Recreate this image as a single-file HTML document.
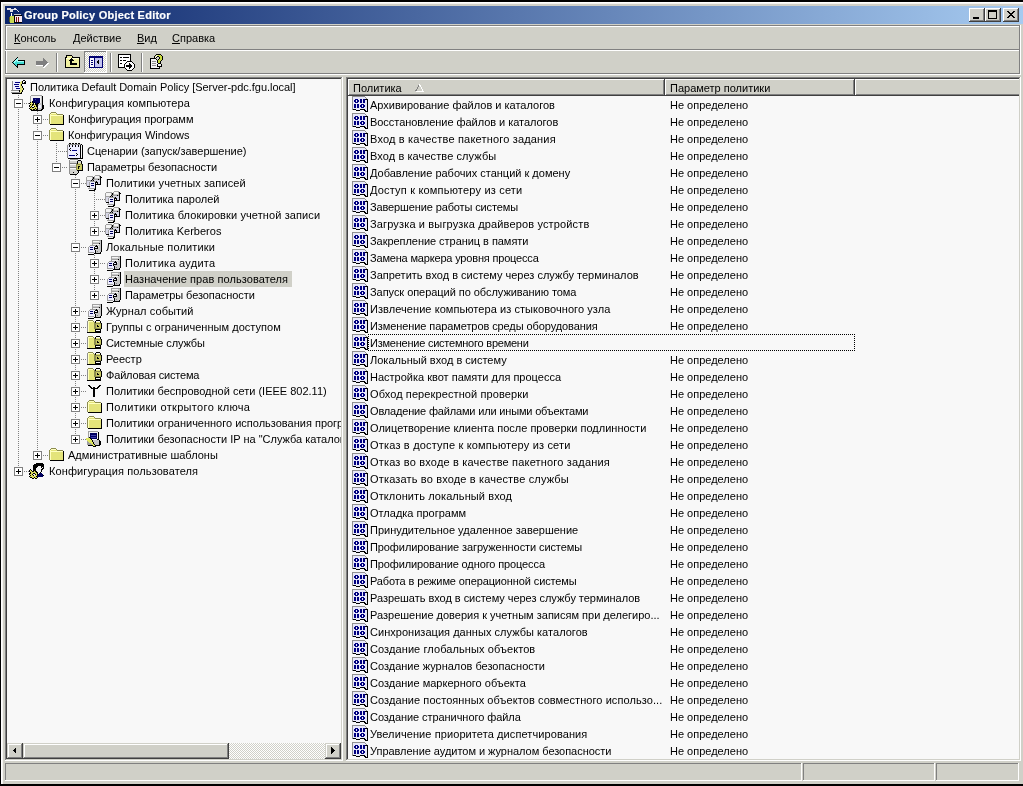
<!DOCTYPE html><html><head><meta charset="utf-8"><style>
html,body{margin:0;padding:0;}
body{width:1023px;height:786px;overflow:hidden;position:relative;background:#000;font-family:"Liberation Sans", sans-serif;font-size:11px;}
.t{position:absolute;white-space:nowrap;line-height:13px;color:#000;will-change:transform;}
svg{shape-rendering:crispEdges;}
</style></head><body>
<svg width="0" height="0" style="position:absolute"><defs>
<symbol id="ico-list" viewBox="0 0 16 16"><rect x="0" y="0" width="13" height="1" fill="#909090"/><rect x="0" y="1" width="1" height="1" fill="#909090"/><rect x="1" y="1" width="12" height="1" fill="#E8E8FA"/><rect x="13" y="1" width="1" height="1" fill="#909090"/><rect x="0" y="2" width="1" height="1" fill="#909090"/><rect x="1" y="2" width="13" height="1" fill="#E8E8FA"/><rect x="14" y="2" width="1" height="1" fill="#909090"/><rect x="0" y="3" width="1" height="1" fill="#909090"/><rect x="1" y="3" width="2" height="1" fill="#E8E8FA"/><rect x="3" y="3" width="3" height="1" fill="#000080"/><rect x="6" y="3" width="2" height="1" fill="#E8E8FA"/><rect x="8" y="3" width="2" height="1" fill="#000080"/><rect x="10" y="3" width="1" height="1" fill="#E8E8FA"/><rect x="11" y="3" width="2" height="1" fill="#000080"/><rect x="13" y="3" width="3" height="1" fill="#000000"/><rect x="0" y="4" width="1" height="1" fill="#909090"/><rect x="1" y="4" width="1" height="1" fill="#E8E8FA"/><rect x="2" y="4" width="2" height="1" fill="#000080"/><rect x="4" y="4" width="1" height="1" fill="#E8E8FA"/><rect x="5" y="4" width="2" height="1" fill="#000080"/><rect x="7" y="4" width="1" height="1" fill="#E8E8FA"/><rect x="8" y="4" width="2" height="1" fill="#000080"/><rect x="10" y="4" width="1" height="1" fill="#E8E8FA"/><rect x="11" y="4" width="2" height="1" fill="#000080"/><rect x="13" y="4" width="2" height="1" fill="#E8E8FA"/><rect x="15" y="4" width="1" height="1" fill="#000000"/><rect x="0" y="5" width="1" height="1" fill="#909090"/><rect x="1" y="5" width="1" height="1" fill="#E8E8FA"/><rect x="2" y="5" width="2" height="1" fill="#000080"/><rect x="4" y="5" width="1" height="1" fill="#E8E8FA"/><rect x="5" y="5" width="2" height="1" fill="#000080"/><rect x="7" y="5" width="1" height="1" fill="#E8E8FA"/><rect x="8" y="5" width="2" height="1" fill="#000080"/><rect x="10" y="5" width="1" height="1" fill="#E8E8FA"/><rect x="11" y="5" width="2" height="1" fill="#000080"/><rect x="13" y="5" width="2" height="1" fill="#E8E8FA"/><rect x="15" y="5" width="1" height="1" fill="#000000"/><rect x="0" y="6" width="1" height="1" fill="#909090"/><rect x="1" y="6" width="2" height="1" fill="#E8E8FA"/><rect x="3" y="6" width="3" height="1" fill="#000080"/><rect x="6" y="6" width="2" height="1" fill="#E8E8FA"/><rect x="8" y="6" width="2" height="1" fill="#000080"/><rect x="10" y="6" width="1" height="1" fill="#E8E8FA"/><rect x="11" y="6" width="2" height="1" fill="#000080"/><rect x="13" y="6" width="2" height="1" fill="#E8E8FA"/><rect x="15" y="6" width="1" height="1" fill="#000000"/><rect x="0" y="7" width="1" height="1" fill="#909090"/><rect x="1" y="7" width="14" height="1" fill="#E8E8FA"/><rect x="15" y="7" width="1" height="1" fill="#000000"/><rect x="0" y="8" width="1" height="1" fill="#909090"/><rect x="1" y="8" width="1" height="1" fill="#E8E8FA"/><rect x="2" y="8" width="2" height="1" fill="#000080"/><rect x="4" y="8" width="1" height="1" fill="#E8E8FA"/><rect x="5" y="8" width="2" height="1" fill="#000080"/><rect x="7" y="8" width="2" height="1" fill="#E8E8FA"/><rect x="9" y="8" width="3" height="1" fill="#000080"/><rect x="12" y="8" width="3" height="1" fill="#E8E8FA"/><rect x="15" y="8" width="1" height="1" fill="#000000"/><rect x="0" y="9" width="1" height="1" fill="#909090"/><rect x="1" y="9" width="1" height="1" fill="#E8E8FA"/><rect x="2" y="9" width="2" height="1" fill="#000080"/><rect x="4" y="9" width="1" height="1" fill="#E8E8FA"/><rect x="5" y="9" width="2" height="1" fill="#000080"/><rect x="7" y="9" width="1" height="1" fill="#E8E8FA"/><rect x="8" y="9" width="2" height="1" fill="#000080"/><rect x="10" y="9" width="1" height="1" fill="#E8E8FA"/><rect x="11" y="9" width="2" height="1" fill="#000080"/><rect x="13" y="9" width="2" height="1" fill="#E8E8FA"/><rect x="15" y="9" width="1" height="1" fill="#000000"/><rect x="0" y="10" width="1" height="1" fill="#909090"/><rect x="1" y="10" width="1" height="1" fill="#E8E8FA"/><rect x="2" y="10" width="2" height="1" fill="#000080"/><rect x="4" y="10" width="1" height="1" fill="#E8E8FA"/><rect x="5" y="10" width="2" height="1" fill="#000080"/><rect x="7" y="10" width="1" height="1" fill="#E8E8FA"/><rect x="8" y="10" width="2" height="1" fill="#000080"/><rect x="10" y="10" width="1" height="1" fill="#E8E8FA"/><rect x="11" y="10" width="2" height="1" fill="#000080"/><rect x="13" y="10" width="2" height="1" fill="#E8E8FA"/><rect x="15" y="10" width="1" height="1" fill="#000000"/><rect x="0" y="11" width="1" height="1" fill="#909090"/><rect x="1" y="11" width="1" height="1" fill="#E8E8FA"/><rect x="2" y="11" width="2" height="1" fill="#000080"/><rect x="4" y="11" width="1" height="1" fill="#E8E8FA"/><rect x="5" y="11" width="2" height="1" fill="#000080"/><rect x="7" y="11" width="2" height="1" fill="#E8E8FA"/><rect x="9" y="11" width="3" height="1" fill="#000080"/><rect x="12" y="11" width="3" height="1" fill="#E8E8FA"/><rect x="15" y="11" width="1" height="1" fill="#000000"/><rect x="0" y="12" width="1" height="1" fill="#909090"/><rect x="1" y="12" width="14" height="1" fill="#E8E8FA"/><rect x="15" y="12" width="1" height="1" fill="#000000"/><rect x="0" y="13" width="1" height="1" fill="#909090"/><rect x="1" y="13" width="3" height="1" fill="#000000"/><rect x="4" y="13" width="4" height="1" fill="#E8E8FA"/><rect x="8" y="13" width="5" height="1" fill="#000000"/><rect x="13" y="13" width="2" height="1" fill="#E8E8FA"/><rect x="15" y="13" width="1" height="1" fill="#000000"/><rect x="4" y="14" width="4" height="1" fill="#000000"/><rect x="12" y="14" width="2" height="1" fill="#000000"/><rect x="14" y="14" width="1" height="1" fill="#E8E8FA"/><rect x="15" y="14" width="1" height="1" fill="#000000"/><rect x="13" y="15" width="3" height="1" fill="#000000"/></symbol>
<symbol id="ico-folder" viewBox="0 0 16 16"><rect x="2" y="1" width="5" height="1" fill="#8C8C50"/><rect x="1" y="2" width="1" height="1" fill="#8C8C50"/><rect x="2" y="2" width="5" height="1" fill="#FFFFC0"/><rect x="7" y="2" width="1" height="1" fill="#8C8C50"/><rect x="0" y="3" width="1" height="1" fill="#8C8C50"/><rect x="1" y="3" width="1" height="1" fill="#FFFFC0"/><rect x="2" y="3" width="6" height="1" fill="#E4E47A"/><rect x="8" y="3" width="6" height="1" fill="#8C8C50"/><rect x="0" y="4" width="1" height="1" fill="#8C8C50"/><rect x="1" y="4" width="13" height="1" fill="#FFFFC0"/><rect x="14" y="4" width="1" height="1" fill="#000000"/><rect x="0" y="5" width="1" height="1" fill="#8C8C50"/><rect x="1" y="5" width="1" height="1" fill="#FFFFC0"/><rect x="2" y="5" width="12" height="1" fill="#E4E47A"/><rect x="14" y="5" width="1" height="1" fill="#000000"/><rect x="0" y="6" width="1" height="1" fill="#8C8C50"/><rect x="1" y="6" width="1" height="1" fill="#FFFFC0"/><rect x="2" y="6" width="12" height="1" fill="#E4E47A"/><rect x="14" y="6" width="1" height="1" fill="#000000"/><rect x="0" y="7" width="1" height="1" fill="#8C8C50"/><rect x="1" y="7" width="1" height="1" fill="#FFFFC0"/><rect x="2" y="7" width="12" height="1" fill="#E4E47A"/><rect x="14" y="7" width="1" height="1" fill="#000000"/><rect x="0" y="8" width="1" height="1" fill="#8C8C50"/><rect x="1" y="8" width="1" height="1" fill="#FFFFC0"/><rect x="2" y="8" width="12" height="1" fill="#E4E47A"/><rect x="14" y="8" width="1" height="1" fill="#000000"/><rect x="0" y="9" width="1" height="1" fill="#8C8C50"/><rect x="1" y="9" width="1" height="1" fill="#FFFFC0"/><rect x="2" y="9" width="12" height="1" fill="#E4E47A"/><rect x="14" y="9" width="1" height="1" fill="#000000"/><rect x="0" y="10" width="1" height="1" fill="#8C8C50"/><rect x="1" y="10" width="1" height="1" fill="#FFFFC0"/><rect x="2" y="10" width="12" height="1" fill="#E4E47A"/><rect x="14" y="10" width="1" height="1" fill="#000000"/><rect x="0" y="11" width="1" height="1" fill="#8C8C50"/><rect x="1" y="11" width="1" height="1" fill="#FFFFC0"/><rect x="2" y="11" width="12" height="1" fill="#E4E47A"/><rect x="14" y="11" width="1" height="1" fill="#000000"/><rect x="0" y="12" width="1" height="1" fill="#8C8C50"/><rect x="1" y="12" width="1" height="1" fill="#FFFFC0"/><rect x="2" y="12" width="12" height="1" fill="#E4E47A"/><rect x="14" y="12" width="1" height="1" fill="#000000"/><rect x="1" y="13" width="14" height="1" fill="#000000"/></symbol>
<symbol id="ico-box-plus" viewBox="0 0 9 9">
<rect x="0.5" y="0.5" width="8" height="8" fill="#fff" stroke="#808080"/>
<rect x="2" y="4" width="5" height="1" fill="#000"/><rect x="4" y="2" width="1" height="5" fill="#000"/>
</symbol>
<symbol id="ico-box-minus" viewBox="0 0 9 9">
<rect x="0.5" y="0.5" width="8" height="8" fill="#fff" stroke="#808080"/>
<rect x="2" y="4" width="5" height="1" fill="#000"/>
</symbol>
<symbol id="ico-policy" viewBox="0 0 16 16"><rect x="13" y="1" width="2" height="1" fill="#000000"/><rect x="2" y="2" width="1" height="1" fill="#909090"/><rect x="3" y="2" width="8" height="1" fill="#EEEEFF"/><rect x="11" y="2" width="1" height="1" fill="#E4E47A"/><rect x="12" y="2" width="1" height="1" fill="#000000"/><rect x="14" y="2" width="1" height="1" fill="#F8F8F8"/><rect x="15" y="2" width="1" height="1" fill="#000000"/><rect x="2" y="3" width="1" height="1" fill="#909090"/><rect x="3" y="3" width="2" height="1" fill="#EEEEFF"/><rect x="5" y="3" width="5" height="1" fill="#000080"/><rect x="10" y="3" width="2" height="1" fill="#E4E47A"/><rect x="12" y="3" width="1" height="1" fill="#000000"/><rect x="14" y="3" width="2" height="1" fill="#000000"/><rect x="2" y="4" width="1" height="1" fill="#909090"/><rect x="3" y="4" width="7" height="1" fill="#EEEEFF"/><rect x="10" y="4" width="2" height="1" fill="#E4E47A"/><rect x="12" y="4" width="4" height="1" fill="#000000"/><rect x="2" y="5" width="1" height="1" fill="#909090"/><rect x="3" y="5" width="1" height="1" fill="#EEEEFF"/><rect x="4" y="5" width="5" height="1" fill="#000080"/><rect x="9" y="5" width="1" height="1" fill="#EEEEFF"/><rect x="10" y="5" width="1" height="1" fill="#E4E47A"/><rect x="11" y="5" width="1" height="1" fill="#000000"/><rect x="2" y="6" width="1" height="1" fill="#909090"/><rect x="3" y="6" width="7" height="1" fill="#EEEEFF"/><rect x="10" y="6" width="1" height="1" fill="#E4E47A"/><rect x="11" y="6" width="1" height="1" fill="#000000"/><rect x="2" y="7" width="1" height="1" fill="#909090"/><rect x="3" y="7" width="2" height="1" fill="#EEEEFF"/><rect x="5" y="7" width="4" height="1" fill="#000080"/><rect x="9" y="7" width="1" height="1" fill="#EEEEFF"/><rect x="10" y="7" width="2" height="1" fill="#E4E47A"/><rect x="12" y="7" width="1" height="1" fill="#000000"/><rect x="2" y="8" width="1" height="1" fill="#909090"/><rect x="3" y="8" width="7" height="1" fill="#EEEEFF"/><rect x="10" y="8" width="2" height="1" fill="#E4E47A"/><rect x="12" y="8" width="1" height="1" fill="#000000"/><rect x="2" y="9" width="1" height="1" fill="#909090"/><rect x="3" y="9" width="3" height="1" fill="#EEEEFF"/><rect x="6" y="9" width="4" height="1" fill="#000080"/><rect x="10" y="9" width="3" height="1" fill="#E4E47A"/><rect x="13" y="9" width="1" height="1" fill="#000000"/><rect x="2" y="10" width="1" height="1" fill="#909090"/><rect x="3" y="10" width="7" height="1" fill="#EEEEFF"/><rect x="10" y="10" width="3" height="1" fill="#E4E47A"/><rect x="13" y="10" width="1" height="1" fill="#000000"/><rect x="1" y="11" width="8" height="1" fill="#909090"/><rect x="9" y="11" width="1" height="1" fill="#000000"/><rect x="10" y="11" width="2" height="1" fill="#E4E47A"/><rect x="12" y="11" width="1" height="1" fill="#000000"/><rect x="1" y="12" width="8" height="1" fill="#F8F8F8"/><rect x="9" y="12" width="1" height="1" fill="#000000"/><rect x="10" y="12" width="2" height="1" fill="#E4E47A"/><rect x="12" y="12" width="1" height="1" fill="#000000"/><rect x="1" y="13" width="9" height="1" fill="#909090"/><rect x="10" y="13" width="1" height="1" fill="#E4E47A"/><rect x="11" y="13" width="1" height="1" fill="#000000"/><rect x="2" y="14" width="10" height="1" fill="#000000"/></symbol>
<symbol id="ico-computer" viewBox="0 0 16 16"><rect x="2" y="0" width="11" height="1" fill="#A0A0A0"/><rect x="1" y="1" width="1" height="1" fill="#A0A0A0"/><rect x="2" y="1" width="10" height="1" fill="#F4F4F4"/><rect x="12" y="1" width="1" height="1" fill="#C8C8C8"/><rect x="13" y="1" width="1" height="1" fill="#000000"/><rect x="1" y="2" width="1" height="1" fill="#A0A0A0"/><rect x="2" y="2" width="10" height="1" fill="#F4F4F4"/><rect x="12" y="2" width="1" height="1" fill="#C8C8C8"/><rect x="13" y="2" width="1" height="1" fill="#000000"/><rect x="1" y="3" width="1" height="1" fill="#A0A0A0"/><rect x="2" y="3" width="2" height="1" fill="#F4F4F4"/><rect x="4" y="3" width="7" height="1" fill="#000060"/><rect x="11" y="3" width="1" height="1" fill="#F4F4F4"/><rect x="12" y="3" width="1" height="1" fill="#C8C8C8"/><rect x="13" y="3" width="1" height="1" fill="#000000"/><rect x="1" y="4" width="1" height="1" fill="#A0A0A0"/><rect x="2" y="4" width="2" height="1" fill="#F4F4F4"/><rect x="4" y="4" width="2" height="1" fill="#000060"/><rect x="6" y="4" width="1" height="1" fill="#4040B0"/><rect x="7" y="4" width="4" height="1" fill="#000060"/><rect x="11" y="4" width="1" height="1" fill="#F4F4F4"/><rect x="12" y="4" width="1" height="1" fill="#C8C8C8"/><rect x="13" y="4" width="1" height="1" fill="#000000"/><rect x="1" y="5" width="1" height="1" fill="#A0A0A0"/><rect x="2" y="5" width="2" height="1" fill="#F4F4F4"/><rect x="4" y="5" width="7" height="1" fill="#000060"/><rect x="11" y="5" width="1" height="1" fill="#F4F4F4"/><rect x="12" y="5" width="1" height="1" fill="#C8C8C8"/><rect x="13" y="5" width="1" height="1" fill="#000000"/><rect x="1" y="6" width="1" height="1" fill="#A0A0A0"/><rect x="2" y="6" width="1" height="1" fill="#F4F4F4"/><rect x="3" y="6" width="1" height="1" fill="#000000"/><rect x="4" y="6" width="7" height="1" fill="#000060"/><rect x="11" y="6" width="1" height="1" fill="#F4F4F4"/><rect x="12" y="6" width="1" height="1" fill="#C8C8C8"/><rect x="13" y="6" width="1" height="1" fill="#000000"/><rect x="1" y="7" width="1" height="1" fill="#000000"/><rect x="2" y="7" width="1" height="1" fill="#DCDC60"/><rect x="3" y="7" width="1" height="1" fill="#000000"/><rect x="4" y="7" width="1" height="1" fill="#000060"/><rect x="5" y="7" width="1" height="1" fill="#000000"/><rect x="6" y="7" width="5" height="1" fill="#000060"/><rect x="11" y="7" width="1" height="1" fill="#F4F4F4"/><rect x="12" y="7" width="1" height="1" fill="#C8C8C8"/><rect x="13" y="7" width="1" height="1" fill="#000000"/><rect x="0" y="8" width="1" height="1" fill="#000000"/><rect x="1" y="8" width="3" height="1" fill="#DCDC60"/><rect x="4" y="8" width="1" height="1" fill="#000000"/><rect x="5" y="8" width="1" height="1" fill="#F4F4F4"/><rect x="6" y="8" width="1" height="1" fill="#000000"/><rect x="7" y="8" width="1" height="1" fill="#000060"/><rect x="8" y="8" width="2" height="1" fill="#000000"/><rect x="10" y="8" width="3" height="1" fill="#C8C8C8"/><rect x="13" y="8" width="1" height="1" fill="#000000"/><rect x="1" y="9" width="1" height="1" fill="#000000"/><rect x="2" y="9" width="1" height="1" fill="#DCDC60"/><rect x="3" y="9" width="2" height="1" fill="#000000"/><rect x="5" y="9" width="1" height="1" fill="#DCDC60"/><rect x="6" y="9" width="3" height="1" fill="#000000"/><rect x="9" y="9" width="4" height="1" fill="#C8C8C8"/><rect x="13" y="9" width="1" height="1" fill="#000000"/><rect x="0" y="10" width="1" height="1" fill="#000000"/><rect x="1" y="10" width="2" height="1" fill="#DCDC60"/><rect x="3" y="10" width="1" height="1" fill="#000000"/><rect x="4" y="10" width="3" height="1" fill="#DCDC60"/><rect x="7" y="10" width="2" height="1" fill="#000000"/><rect x="9" y="10" width="1" height="1" fill="#C8C8C8"/><rect x="10" y="10" width="2" height="1" fill="#EEEEFF"/><rect x="12" y="10" width="1" height="1" fill="#C8C8C8"/><rect x="13" y="10" width="2" height="1" fill="#000000"/><rect x="0" y="11" width="1" height="1" fill="#000000"/><rect x="1" y="11" width="1" height="1" fill="#DCDC60"/><rect x="2" y="11" width="1" height="1" fill="#000000"/><rect x="3" y="11" width="2" height="1" fill="#F4F4F4"/><rect x="5" y="11" width="1" height="1" fill="#000000"/><rect x="6" y="11" width="1" height="1" fill="#DCDC60"/><rect x="7" y="11" width="2" height="1" fill="#000000"/><rect x="9" y="11" width="3" height="1" fill="#EEEEFF"/><rect x="12" y="11" width="1" height="1" fill="#C8C8C8"/><rect x="13" y="11" width="2" height="1" fill="#000000"/><rect x="1" y="12" width="1" height="1" fill="#000000"/><rect x="2" y="12" width="1" height="1" fill="#DCDC60"/><rect x="3" y="12" width="2" height="1" fill="#000000"/><rect x="5" y="12" width="3" height="1" fill="#DCDC60"/><rect x="8" y="12" width="1" height="1" fill="#000000"/><rect x="9" y="12" width="3" height="1" fill="#EEEEFF"/><rect x="12" y="12" width="1" height="1" fill="#C8C8C8"/><rect x="13" y="12" width="2" height="1" fill="#000000"/><rect x="0" y="13" width="1" height="1" fill="#000000"/><rect x="1" y="13" width="5" height="1" fill="#DCDC60"/><rect x="6" y="13" width="1" height="1" fill="#000000"/><rect x="7" y="13" width="1" height="1" fill="#DCDC60"/><rect x="8" y="13" width="1" height="1" fill="#000000"/><rect x="9" y="13" width="4" height="1" fill="#C8C8C8"/><rect x="13" y="13" width="2" height="1" fill="#000000"/><rect x="1" y="14" width="2" height="1" fill="#000000"/><rect x="3" y="14" width="1" height="1" fill="#DCDC60"/><rect x="4" y="14" width="2" height="1" fill="#000000"/><rect x="6" y="14" width="1" height="1" fill="#DCDC60"/><rect x="7" y="14" width="2" height="1" fill="#000000"/><rect x="9" y="14" width="3" height="1" fill="#C8C8C8"/><rect x="12" y="14" width="2" height="1" fill="#000000"/><rect x="2" y="15" width="11" height="1" fill="#000000"/></symbol>
<symbol id="ico-scripts" viewBox="0 0 16 16"><rect x="2" y="0" width="2" height="1" fill="#000000"/><rect x="5" y="0" width="2" height="1" fill="#000000"/><rect x="8" y="0" width="2" height="1" fill="#000000"/><rect x="11" y="0" width="2" height="1" fill="#000000"/><rect x="1" y="1" width="13" height="1" fill="#909090"/><rect x="14" y="1" width="1" height="1" fill="#000000"/><rect x="0" y="2" width="1" height="1" fill="#909090"/><rect x="1" y="2" width="1" height="1" fill="#EEEEFF"/><rect x="2" y="2" width="1" height="1" fill="#000000"/><rect x="3" y="2" width="2" height="1" fill="#EEEEFF"/><rect x="5" y="2" width="1" height="1" fill="#000000"/><rect x="6" y="2" width="2" height="1" fill="#EEEEFF"/><rect x="8" y="2" width="1" height="1" fill="#000000"/><rect x="9" y="2" width="2" height="1" fill="#EEEEFF"/><rect x="11" y="2" width="1" height="1" fill="#000000"/><rect x="12" y="2" width="1" height="1" fill="#EEEEFF"/><rect x="13" y="2" width="1" height="1" fill="#000000"/><rect x="14" y="2" width="1" height="1" fill="#F8F8F8"/><rect x="15" y="2" width="1" height="1" fill="#000000"/><rect x="0" y="3" width="1" height="1" fill="#909090"/><rect x="1" y="3" width="1" height="1" fill="#EEEEFF"/><rect x="2" y="3" width="1" height="1" fill="#000000"/><rect x="3" y="3" width="2" height="1" fill="#EEEEFF"/><rect x="5" y="3" width="1" height="1" fill="#000000"/><rect x="6" y="3" width="2" height="1" fill="#EEEEFF"/><rect x="8" y="3" width="1" height="1" fill="#000000"/><rect x="9" y="3" width="2" height="1" fill="#EEEEFF"/><rect x="11" y="3" width="1" height="1" fill="#000000"/><rect x="12" y="3" width="1" height="1" fill="#EEEEFF"/><rect x="13" y="3" width="1" height="1" fill="#000000"/><rect x="14" y="3" width="1" height="1" fill="#F8F8F8"/><rect x="15" y="3" width="1" height="1" fill="#000000"/><rect x="0" y="4" width="1" height="1" fill="#909090"/><rect x="1" y="4" width="12" height="1" fill="#EEEEFF"/><rect x="13" y="4" width="1" height="1" fill="#000000"/><rect x="14" y="4" width="1" height="1" fill="#F8F8F8"/><rect x="15" y="4" width="1" height="1" fill="#000000"/><rect x="0" y="5" width="1" height="1" fill="#909090"/><rect x="1" y="5" width="2" height="1" fill="#EEEEFF"/><rect x="3" y="5" width="1" height="1" fill="#000000"/><rect x="4" y="5" width="9" height="1" fill="#EEEEFF"/><rect x="13" y="5" width="1" height="1" fill="#000000"/><rect x="14" y="5" width="1" height="1" fill="#F8F8F8"/><rect x="15" y="5" width="1" height="1" fill="#000000"/><rect x="0" y="6" width="1" height="1" fill="#909090"/><rect x="1" y="6" width="1" height="1" fill="#EEEEFF"/><rect x="2" y="6" width="1" height="1" fill="#000000"/><rect x="3" y="6" width="10" height="1" fill="#EEEEFF"/><rect x="13" y="6" width="1" height="1" fill="#000000"/><rect x="14" y="6" width="1" height="1" fill="#F8F8F8"/><rect x="15" y="6" width="1" height="1" fill="#000000"/><rect x="0" y="7" width="1" height="1" fill="#909090"/><rect x="1" y="7" width="2" height="1" fill="#EEEEFF"/><rect x="3" y="7" width="1" height="1" fill="#000000"/><rect x="4" y="7" width="1" height="1" fill="#EEEEFF"/><rect x="5" y="7" width="5" height="1" fill="#000080"/><rect x="10" y="7" width="3" height="1" fill="#EEEEFF"/><rect x="13" y="7" width="1" height="1" fill="#000000"/><rect x="14" y="7" width="1" height="1" fill="#F8F8F8"/><rect x="15" y="7" width="1" height="1" fill="#000000"/><rect x="0" y="8" width="1" height="1" fill="#909090"/><rect x="1" y="8" width="12" height="1" fill="#EEEEFF"/><rect x="13" y="8" width="1" height="1" fill="#000000"/><rect x="14" y="8" width="1" height="1" fill="#F8F8F8"/><rect x="15" y="8" width="1" height="1" fill="#000000"/><rect x="0" y="9" width="1" height="1" fill="#909090"/><rect x="1" y="9" width="12" height="1" fill="#EEEEFF"/><rect x="13" y="9" width="1" height="1" fill="#000000"/><rect x="14" y="9" width="1" height="1" fill="#F8F8F8"/><rect x="15" y="9" width="1" height="1" fill="#000000"/><rect x="0" y="10" width="1" height="1" fill="#909090"/><rect x="1" y="10" width="8" height="1" fill="#EEEEFF"/><rect x="9" y="10" width="1" height="1" fill="#000000"/><rect x="10" y="10" width="3" height="1" fill="#EEEEFF"/><rect x="13" y="10" width="1" height="1" fill="#000000"/><rect x="14" y="10" width="1" height="1" fill="#F8F8F8"/><rect x="15" y="10" width="1" height="1" fill="#000000"/><rect x="0" y="11" width="1" height="1" fill="#909090"/><rect x="1" y="11" width="9" height="1" fill="#EEEEFF"/><rect x="10" y="11" width="1" height="1" fill="#000000"/><rect x="11" y="11" width="2" height="1" fill="#EEEEFF"/><rect x="13" y="11" width="1" height="1" fill="#000000"/><rect x="14" y="11" width="1" height="1" fill="#F8F8F8"/><rect x="15" y="11" width="1" height="1" fill="#000000"/><rect x="0" y="12" width="1" height="1" fill="#909090"/><rect x="1" y="12" width="1" height="1" fill="#EEEEFF"/><rect x="2" y="12" width="6" height="1" fill="#000080"/><rect x="8" y="12" width="1" height="1" fill="#EEEEFF"/><rect x="9" y="12" width="1" height="1" fill="#000000"/><rect x="10" y="12" width="3" height="1" fill="#EEEEFF"/><rect x="13" y="12" width="1" height="1" fill="#000000"/><rect x="14" y="12" width="1" height="1" fill="#F8F8F8"/><rect x="15" y="12" width="1" height="1" fill="#000000"/><rect x="0" y="13" width="1" height="1" fill="#909090"/><rect x="1" y="13" width="12" height="1" fill="#EEEEFF"/><rect x="13" y="13" width="1" height="1" fill="#000000"/><rect x="14" y="13" width="1" height="1" fill="#F8F8F8"/><rect x="15" y="13" width="1" height="1" fill="#000000"/><rect x="0" y="14" width="1" height="1" fill="#909090"/><rect x="1" y="14" width="12" height="1" fill="#EEEEFF"/><rect x="13" y="14" width="1" height="1" fill="#000000"/><rect x="14" y="14" width="1" height="1" fill="#F8F8F8"/><rect x="15" y="14" width="1" height="1" fill="#000000"/><rect x="1" y="15" width="15" height="1" fill="#000000"/></symbol>
<symbol id="ico-secset" viewBox="0 0 16 16"><rect x="3" y="0" width="8" height="1" fill="#909090"/><rect x="2" y="1" width="1" height="1" fill="#909090"/><rect x="3" y="1" width="7" height="1" fill="#F8F8F8"/><rect x="10" y="1" width="1" height="1" fill="#D4D4D0"/><rect x="11" y="1" width="3" height="1" fill="#000000"/><rect x="2" y="2" width="1" height="1" fill="#909090"/><rect x="3" y="2" width="7" height="1" fill="#D4D4D0"/><rect x="10" y="2" width="1" height="1" fill="#000000"/><rect x="11" y="2" width="3" height="1" fill="#D4D4D0"/><rect x="14" y="2" width="1" height="1" fill="#000000"/><rect x="2" y="3" width="1" height="1" fill="#909090"/><rect x="3" y="3" width="7" height="1" fill="#D4D4D0"/><rect x="10" y="3" width="1" height="1" fill="#000000"/><rect x="11" y="3" width="3" height="1" fill="#D4D4D0"/><rect x="14" y="3" width="1" height="1" fill="#000000"/><rect x="2" y="4" width="1" height="1" fill="#909090"/><rect x="3" y="4" width="7" height="1" fill="#808080"/><rect x="10" y="4" width="1" height="1" fill="#000000"/><rect x="11" y="4" width="3" height="1" fill="#E4E47A"/><rect x="14" y="4" width="1" height="1" fill="#000000"/><rect x="2" y="5" width="1" height="1" fill="#909090"/><rect x="3" y="5" width="6" height="1" fill="#F8F8F8"/><rect x="9" y="5" width="6" height="1" fill="#8C8C50"/><rect x="15" y="5" width="1" height="1" fill="#000000"/><rect x="2" y="6" width="1" height="1" fill="#909090"/><rect x="3" y="6" width="6" height="1" fill="#D4D4D0"/><rect x="9" y="6" width="1" height="1" fill="#8C8C50"/><rect x="10" y="6" width="5" height="1" fill="#C8C860"/><rect x="15" y="6" width="1" height="1" fill="#000000"/><rect x="2" y="7" width="1" height="1" fill="#909090"/><rect x="3" y="7" width="6" height="1" fill="#D4D4D0"/><rect x="9" y="7" width="1" height="1" fill="#8C8C50"/><rect x="10" y="7" width="1" height="1" fill="#C8C860"/><rect x="11" y="7" width="2" height="1" fill="#000000"/><rect x="13" y="7" width="2" height="1" fill="#C8C860"/><rect x="15" y="7" width="1" height="1" fill="#000000"/><rect x="2" y="8" width="1" height="1" fill="#909090"/><rect x="3" y="8" width="6" height="1" fill="#808080"/><rect x="9" y="8" width="1" height="1" fill="#8C8C50"/><rect x="10" y="8" width="1" height="1" fill="#C8C860"/><rect x="11" y="8" width="1" height="1" fill="#000000"/><rect x="12" y="8" width="3" height="1" fill="#C8C860"/><rect x="15" y="8" width="1" height="1" fill="#000000"/><rect x="2" y="9" width="1" height="1" fill="#909090"/><rect x="3" y="9" width="6" height="1" fill="#F8F8F8"/><rect x="9" y="9" width="1" height="1" fill="#8C8C50"/><rect x="10" y="9" width="1" height="1" fill="#C8C860"/><rect x="11" y="9" width="1" height="1" fill="#000000"/><rect x="12" y="9" width="3" height="1" fill="#C8C860"/><rect x="15" y="9" width="1" height="1" fill="#000000"/><rect x="2" y="10" width="1" height="1" fill="#909090"/><rect x="3" y="10" width="6" height="1" fill="#D4D4D0"/><rect x="9" y="10" width="1" height="1" fill="#8C8C50"/><rect x="10" y="10" width="5" height="1" fill="#C8C860"/><rect x="15" y="10" width="1" height="1" fill="#000000"/><rect x="2" y="11" width="1" height="1" fill="#909090"/><rect x="3" y="11" width="7" height="1" fill="#D4D4D0"/><rect x="10" y="11" width="6" height="1" fill="#000000"/><rect x="2" y="12" width="1" height="1" fill="#909090"/><rect x="3" y="12" width="8" height="1" fill="#D4D4D0"/><rect x="11" y="12" width="1" height="1" fill="#000000"/><rect x="2" y="13" width="1" height="1" fill="#909090"/><rect x="3" y="13" width="3" height="1" fill="#D4D4D0"/><rect x="6" y="13" width="1" height="1" fill="#000000"/><rect x="7" y="13" width="4" height="1" fill="#D4D4D0"/><rect x="11" y="13" width="1" height="1" fill="#000000"/><rect x="2" y="14" width="1" height="1" fill="#909090"/><rect x="3" y="14" width="7" height="1" fill="#D4D4D0"/><rect x="10" y="14" width="1" height="1" fill="#000000"/><rect x="3" y="15" width="7" height="1" fill="#000000"/></symbol>
<symbol id="ico-secpol" viewBox="0 0 16 16"><rect x="5" y="1" width="9" height="1" fill="#A0A0A0"/><rect x="14" y="1" width="1" height="1" fill="#000000"/><rect x="5" y="2" width="1" height="1" fill="#A0A0A0"/><rect x="6" y="2" width="6" height="1" fill="#F4F4F4"/><rect x="12" y="2" width="2" height="1" fill="#C8C8C8"/><rect x="14" y="2" width="1" height="1" fill="#000000"/><rect x="5" y="3" width="1" height="1" fill="#A0A0A0"/><rect x="6" y="3" width="8" height="1" fill="#C8C8C8"/><rect x="14" y="3" width="1" height="1" fill="#000000"/><rect x="5" y="4" width="7" height="1" fill="#A0A0A0"/><rect x="12" y="4" width="1" height="1" fill="#000000"/><rect x="13" y="4" width="1" height="1" fill="#C8C8C8"/><rect x="14" y="4" width="1" height="1" fill="#000000"/><rect x="5" y="5" width="1" height="1" fill="#A0A0A0"/><rect x="6" y="5" width="6" height="1" fill="#F4F4F4"/><rect x="12" y="5" width="2" height="1" fill="#C8C8C8"/><rect x="14" y="5" width="1" height="1" fill="#000000"/><rect x="3" y="6" width="6" height="1" fill="#A0A0A0"/><rect x="9" y="6" width="1" height="1" fill="#000000"/><rect x="10" y="6" width="4" height="1" fill="#C8C8C8"/><rect x="14" y="6" width="1" height="1" fill="#000000"/><rect x="2" y="7" width="1" height="1" fill="#A0A0A0"/><rect x="3" y="7" width="5" height="1" fill="#EEEEFF"/><rect x="8" y="7" width="3" height="1" fill="#000000"/><rect x="11" y="7" width="1" height="1" fill="#F4F4F4"/><rect x="12" y="7" width="2" height="1" fill="#C8C8C8"/><rect x="14" y="7" width="1" height="1" fill="#000000"/><rect x="1" y="8" width="1" height="1" fill="#A0A0A0"/><rect x="2" y="8" width="1" height="1" fill="#EEEEFF"/><rect x="3" y="8" width="3" height="1" fill="#000060"/><rect x="6" y="8" width="1" height="1" fill="#EEEEFF"/><rect x="7" y="8" width="1" height="1" fill="#000000"/><rect x="8" y="8" width="2" height="1" fill="#EEEEFF"/><rect x="10" y="8" width="1" height="1" fill="#000000"/><rect x="11" y="8" width="3" height="1" fill="#C8C8C8"/><rect x="14" y="8" width="1" height="1" fill="#000000"/><rect x="1" y="9" width="1" height="1" fill="#A0A0A0"/><rect x="2" y="9" width="5" height="1" fill="#EEEEFF"/><rect x="7" y="9" width="4" height="1" fill="#000000"/><rect x="11" y="9" width="3" height="1" fill="#C8C8C8"/><rect x="14" y="9" width="1" height="1" fill="#000000"/><rect x="1" y="10" width="1" height="1" fill="#A0A0A0"/><rect x="2" y="10" width="1" height="1" fill="#EEEEFF"/><rect x="3" y="10" width="3" height="1" fill="#000060"/><rect x="6" y="10" width="1" height="1" fill="#EEEEFF"/><rect x="7" y="10" width="1" height="1" fill="#000000"/><rect x="8" y="10" width="6" height="1" fill="#C8C8C8"/><rect x="14" y="10" width="1" height="1" fill="#000000"/><rect x="1" y="11" width="1" height="1" fill="#A0A0A0"/><rect x="2" y="11" width="6" height="1" fill="#EEEEFF"/><rect x="8" y="11" width="1" height="1" fill="#000000"/><rect x="9" y="11" width="5" height="1" fill="#C8C8C8"/><rect x="14" y="11" width="1" height="1" fill="#000000"/><rect x="1" y="12" width="1" height="1" fill="#A0A0A0"/><rect x="2" y="12" width="6" height="1" fill="#EEEEFF"/><rect x="8" y="12" width="1" height="1" fill="#000000"/><rect x="9" y="12" width="1" height="1" fill="#C8C8C8"/><rect x="10" y="12" width="1" height="1" fill="#808080"/><rect x="11" y="12" width="3" height="1" fill="#C8C8C8"/><rect x="14" y="12" width="1" height="1" fill="#000000"/><rect x="1" y="13" width="6" height="1" fill="#A0A0A0"/><rect x="7" y="13" width="1" height="1" fill="#EEEEFF"/><rect x="8" y="13" width="1" height="1" fill="#000000"/><rect x="9" y="13" width="4" height="1" fill="#C8C8C8"/><rect x="13" y="13" width="1" height="1" fill="#000000"/><rect x="1" y="14" width="6" height="1" fill="#F4F4F4"/><rect x="7" y="14" width="7" height="1" fill="#000000"/><rect x="1" y="15" width="6" height="1" fill="#000000"/></symbol>
<symbol id="ico-secpol2" viewBox="0 0 16 16"><rect x="9" y="0" width="5" height="1" fill="#A0A0A0"/><rect x="1" y="1" width="6" height="1" fill="#A0A0A0"/><rect x="8" y="1" width="1" height="1" fill="#A0A0A0"/><rect x="9" y="1" width="4" height="1" fill="#F4F4F4"/><rect x="13" y="1" width="1" height="1" fill="#A0A0A0"/><rect x="14" y="1" width="1" height="1" fill="#000000"/><rect x="0" y="2" width="1" height="1" fill="#A0A0A0"/><rect x="1" y="2" width="5" height="1" fill="#F4F4F4"/><rect x="6" y="2" width="1" height="1" fill="#A0A0A0"/><rect x="7" y="2" width="1" height="1" fill="#000000"/><rect x="8" y="2" width="1" height="1" fill="#A0A0A0"/><rect x="9" y="2" width="4" height="1" fill="#F4F4F4"/><rect x="13" y="2" width="1" height="1" fill="#C8C8C8"/><rect x="14" y="2" width="2" height="1" fill="#000000"/><rect x="0" y="3" width="1" height="1" fill="#A0A0A0"/><rect x="1" y="3" width="5" height="1" fill="#F4F4F4"/><rect x="6" y="3" width="1" height="1" fill="#A0A0A0"/><rect x="7" y="3" width="1" height="1" fill="#000000"/><rect x="8" y="3" width="1" height="1" fill="#A0A0A0"/><rect x="9" y="3" width="5" height="1" fill="#C8C8C8"/><rect x="14" y="3" width="1" height="1" fill="#000000"/><rect x="0" y="4" width="1" height="1" fill="#A0A0A0"/><rect x="1" y="4" width="5" height="1" fill="#F4F4F4"/><rect x="6" y="4" width="1" height="1" fill="#000000"/><rect x="7" y="4" width="5" height="1" fill="#A0A0A0"/><rect x="12" y="4" width="1" height="1" fill="#000000"/><rect x="13" y="4" width="1" height="1" fill="#A0A0A0"/><rect x="14" y="4" width="1" height="1" fill="#000000"/><rect x="0" y="5" width="5" height="1" fill="#A0A0A0"/><rect x="5" y="5" width="1" height="1" fill="#000000"/><rect x="6" y="5" width="1" height="1" fill="#A0A0A0"/><rect x="7" y="5" width="1" height="1" fill="#000000"/><rect x="8" y="5" width="6" height="1" fill="#D8D8E8"/><rect x="14" y="5" width="1" height="1" fill="#000000"/><rect x="0" y="6" width="1" height="1" fill="#A0A0A0"/><rect x="1" y="6" width="3" height="1" fill="#D8D8E8"/><rect x="4" y="6" width="6" height="1" fill="#A0A0A0"/><rect x="10" y="6" width="1" height="1" fill="#000000"/><rect x="11" y="6" width="3" height="1" fill="#D8D8E8"/><rect x="14" y="6" width="1" height="1" fill="#000000"/><rect x="0" y="7" width="1" height="1" fill="#A0A0A0"/><rect x="1" y="7" width="2" height="1" fill="#D8D8E8"/><rect x="3" y="7" width="1" height="1" fill="#A0A0A0"/><rect x="4" y="7" width="5" height="1" fill="#EEEEFF"/><rect x="9" y="7" width="3" height="1" fill="#000000"/><rect x="12" y="7" width="2" height="1" fill="#D8D8E8"/><rect x="14" y="7" width="1" height="1" fill="#000000"/><rect x="0" y="8" width="1" height="1" fill="#A0A0A0"/><rect x="1" y="8" width="2" height="1" fill="#D8D8E8"/><rect x="3" y="8" width="1" height="1" fill="#A0A0A0"/><rect x="4" y="8" width="1" height="1" fill="#EEEEFF"/><rect x="5" y="8" width="3" height="1" fill="#000060"/><rect x="8" y="8" width="1" height="1" fill="#EEEEFF"/><rect x="9" y="8" width="1" height="1" fill="#000000"/><rect x="10" y="8" width="1" height="1" fill="#F4F4F4"/><rect x="11" y="8" width="1" height="1" fill="#000000"/><rect x="12" y="8" width="2" height="1" fill="#D8D8E8"/><rect x="14" y="8" width="1" height="1" fill="#000000"/><rect x="0" y="9" width="1" height="1" fill="#A0A0A0"/><rect x="1" y="9" width="2" height="1" fill="#D8D8E8"/><rect x="3" y="9" width="1" height="1" fill="#A0A0A0"/><rect x="4" y="9" width="5" height="1" fill="#EEEEFF"/><rect x="9" y="9" width="6" height="1" fill="#000000"/><rect x="0" y="10" width="1" height="1" fill="#A0A0A0"/><rect x="1" y="10" width="2" height="1" fill="#D8D8E8"/><rect x="3" y="10" width="1" height="1" fill="#A0A0A0"/><rect x="4" y="10" width="1" height="1" fill="#EEEEFF"/><rect x="5" y="10" width="3" height="1" fill="#000060"/><rect x="8" y="10" width="1" height="1" fill="#EEEEFF"/><rect x="9" y="10" width="1" height="1" fill="#000000"/><rect x="1" y="11" width="3" height="1" fill="#000000"/><rect x="4" y="11" width="5" height="1" fill="#EEEEFF"/><rect x="9" y="11" width="1" height="1" fill="#000000"/><rect x="3" y="12" width="1" height="1" fill="#A0A0A0"/><rect x="4" y="12" width="5" height="1" fill="#EEEEFF"/><rect x="9" y="12" width="1" height="1" fill="#000000"/><rect x="2" y="13" width="7" height="1" fill="#A0A0A0"/><rect x="9" y="13" width="1" height="1" fill="#000000"/><rect x="3" y="14" width="5" height="1" fill="#F4F4F4"/><rect x="8" y="14" width="2" height="1" fill="#000000"/><rect x="3" y="15" width="6" height="1" fill="#000000"/></symbol>
<symbol id="ico-lockfolder" viewBox="0 0 16 16"><rect x="1" y="1" width="5" height="1" fill="#8C8C50"/><rect x="9" y="1" width="4" height="1" fill="#000000"/><rect x="0" y="2" width="1" height="1" fill="#909090"/><rect x="1" y="2" width="5" height="1" fill="#FFFFC0"/><rect x="6" y="2" width="1" height="1" fill="#8C8C50"/><rect x="8" y="2" width="1" height="1" fill="#000000"/><rect x="9" y="2" width="4" height="1" fill="#F8F8F8"/><rect x="13" y="2" width="1" height="1" fill="#000000"/><rect x="0" y="3" width="1" height="1" fill="#909090"/><rect x="1" y="3" width="1" height="1" fill="#FFFFC0"/><rect x="2" y="3" width="5" height="1" fill="#E4E47A"/><rect x="7" y="3" width="1" height="1" fill="#8C8C50"/><rect x="8" y="3" width="1" height="1" fill="#000000"/><rect x="9" y="3" width="4" height="1" fill="#E4E47A"/><rect x="13" y="3" width="1" height="1" fill="#000000"/><rect x="0" y="4" width="1" height="1" fill="#909090"/><rect x="1" y="4" width="1" height="1" fill="#FFFFC0"/><rect x="2" y="4" width="5" height="1" fill="#E4E47A"/><rect x="7" y="4" width="7" height="1" fill="#8C8C50"/><rect x="14" y="4" width="1" height="1" fill="#000000"/><rect x="0" y="5" width="1" height="1" fill="#909090"/><rect x="1" y="5" width="1" height="1" fill="#FFFFC0"/><rect x="2" y="5" width="5" height="1" fill="#E4E47A"/><rect x="7" y="5" width="2" height="1" fill="#8C8C50"/><rect x="9" y="5" width="5" height="1" fill="#C8C860"/><rect x="14" y="5" width="1" height="1" fill="#000000"/><rect x="0" y="6" width="1" height="1" fill="#909090"/><rect x="1" y="6" width="1" height="1" fill="#FFFFC0"/><rect x="2" y="6" width="5" height="1" fill="#E4E47A"/><rect x="7" y="6" width="2" height="1" fill="#8C8C50"/><rect x="9" y="6" width="1" height="1" fill="#C8C860"/><rect x="10" y="6" width="1" height="1" fill="#000000"/><rect x="11" y="6" width="3" height="1" fill="#C8C860"/><rect x="14" y="6" width="1" height="1" fill="#000000"/><rect x="0" y="7" width="1" height="1" fill="#909090"/><rect x="1" y="7" width="1" height="1" fill="#FFFFC0"/><rect x="2" y="7" width="5" height="1" fill="#E4E47A"/><rect x="7" y="7" width="2" height="1" fill="#8C8C50"/><rect x="9" y="7" width="1" height="1" fill="#C8C860"/><rect x="10" y="7" width="2" height="1" fill="#000000"/><rect x="12" y="7" width="2" height="1" fill="#C8C860"/><rect x="14" y="7" width="1" height="1" fill="#000000"/><rect x="0" y="8" width="1" height="1" fill="#909090"/><rect x="1" y="8" width="1" height="1" fill="#FFFFC0"/><rect x="2" y="8" width="5" height="1" fill="#E4E47A"/><rect x="7" y="8" width="2" height="1" fill="#8C8C50"/><rect x="9" y="8" width="5" height="1" fill="#C8C860"/><rect x="14" y="8" width="1" height="1" fill="#000000"/><rect x="0" y="9" width="1" height="1" fill="#909090"/><rect x="1" y="9" width="1" height="1" fill="#FFFFC0"/><rect x="2" y="9" width="5" height="1" fill="#E4E47A"/><rect x="7" y="9" width="7" height="1" fill="#8C8C50"/><rect x="14" y="9" width="1" height="1" fill="#000000"/><rect x="0" y="10" width="1" height="1" fill="#909090"/><rect x="1" y="10" width="1" height="1" fill="#FFFFC0"/><rect x="2" y="10" width="6" height="1" fill="#E4E47A"/><rect x="8" y="10" width="6" height="1" fill="#000000"/><rect x="0" y="11" width="1" height="1" fill="#909090"/><rect x="1" y="11" width="1" height="1" fill="#FFFFC0"/><rect x="2" y="11" width="6" height="1" fill="#E4E47A"/><rect x="8" y="11" width="1" height="1" fill="#000000"/><rect x="9" y="11" width="4" height="1" fill="#F8F8F8"/><rect x="13" y="11" width="1" height="1" fill="#000000"/><rect x="0" y="12" width="1" height="1" fill="#909090"/><rect x="1" y="12" width="1" height="1" fill="#FFFFC0"/><rect x="2" y="12" width="6" height="1" fill="#E4E47A"/><rect x="8" y="12" width="6" height="1" fill="#000000"/><rect x="0" y="13" width="14" height="1" fill="#000000"/></symbol>
<symbol id="ico-antenna" viewBox="0 0 16 16"><rect x="1" y="2" width="2" height="1" fill="#000000"/><rect x="12" y="2" width="2" height="1" fill="#000000"/><rect x="2" y="3" width="2" height="1" fill="#000000"/><rect x="11" y="3" width="2" height="1" fill="#000000"/><rect x="3" y="4" width="2" height="1" fill="#000000"/><rect x="6" y="4" width="2" height="1" fill="#000000"/><rect x="10" y="4" width="2" height="1" fill="#000000"/><rect x="4" y="5" width="7" height="1" fill="#000000"/><rect x="6" y="6" width="2" height="1" fill="#000000"/><rect x="6" y="7" width="2" height="1" fill="#000000"/><rect x="6" y="8" width="2" height="1" fill="#000000"/><rect x="6" y="9" width="2" height="1" fill="#000000"/><rect x="6" y="10" width="2" height="1" fill="#000000"/><rect x="6" y="11" width="2" height="1" fill="#000000"/><rect x="6" y="12" width="2" height="1" fill="#000000"/><rect x="6" y="13" width="2" height="1" fill="#000000"/></symbol>
<symbol id="ico-ipsec" viewBox="0 0 16 16"><rect x="2" y="0" width="10" height="1" fill="#A0A0A0"/><rect x="2" y="1" width="1" height="1" fill="#A0A0A0"/><rect x="3" y="1" width="9" height="1" fill="#F4F4F4"/><rect x="12" y="1" width="1" height="1" fill="#000000"/><rect x="2" y="2" width="1" height="1" fill="#A0A0A0"/><rect x="3" y="2" width="1" height="1" fill="#F4F4F4"/><rect x="4" y="2" width="7" height="1" fill="#000060"/><rect x="11" y="2" width="1" height="1" fill="#F4F4F4"/><rect x="12" y="2" width="1" height="1" fill="#000000"/><rect x="2" y="3" width="1" height="1" fill="#A0A0A0"/><rect x="3" y="3" width="1" height="1" fill="#F4F4F4"/><rect x="4" y="3" width="7" height="1" fill="#000060"/><rect x="11" y="3" width="1" height="1" fill="#F4F4F4"/><rect x="12" y="3" width="1" height="1" fill="#000000"/><rect x="2" y="4" width="1" height="1" fill="#A0A0A0"/><rect x="3" y="4" width="1" height="1" fill="#F4F4F4"/><rect x="4" y="4" width="1" height="1" fill="#000060"/><rect x="5" y="4" width="5" height="1" fill="#4040B0"/><rect x="10" y="4" width="1" height="1" fill="#000060"/><rect x="11" y="4" width="1" height="1" fill="#F4F4F4"/><rect x="12" y="4" width="1" height="1" fill="#000000"/><rect x="2" y="5" width="1" height="1" fill="#A0A0A0"/><rect x="3" y="5" width="1" height="1" fill="#F4F4F4"/><rect x="4" y="5" width="7" height="1" fill="#000060"/><rect x="11" y="5" width="1" height="1" fill="#F4F4F4"/><rect x="12" y="5" width="1" height="1" fill="#000000"/><rect x="2" y="6" width="1" height="1" fill="#A0A0A0"/><rect x="3" y="6" width="1" height="1" fill="#000000"/><rect x="4" y="6" width="1" height="1" fill="#000060"/><rect x="5" y="6" width="5" height="1" fill="#4040B0"/><rect x="10" y="6" width="1" height="1" fill="#000060"/><rect x="11" y="6" width="1" height="1" fill="#F4F4F4"/><rect x="12" y="6" width="1" height="1" fill="#000000"/><rect x="0" y="7" width="4" height="1" fill="#E0E860"/><rect x="4" y="7" width="1" height="1" fill="#000000"/><rect x="5" y="7" width="6" height="1" fill="#000060"/><rect x="11" y="7" width="1" height="1" fill="#F4F4F4"/><rect x="12" y="7" width="1" height="1" fill="#000000"/><rect x="0" y="8" width="5" height="1" fill="#E0E860"/><rect x="5" y="8" width="1" height="1" fill="#000000"/><rect x="6" y="8" width="5" height="1" fill="#F4F4F4"/><rect x="11" y="8" width="2" height="1" fill="#000000"/><rect x="1" y="9" width="5" height="1" fill="#E0E860"/><rect x="6" y="9" width="1" height="1" fill="#000000"/><rect x="7" y="9" width="6" height="1" fill="#C8C8C8"/><rect x="13" y="9" width="1" height="1" fill="#000000"/><rect x="1" y="10" width="1" height="1" fill="#A0A0A0"/><rect x="2" y="10" width="4" height="1" fill="#E0E860"/><rect x="6" y="10" width="1" height="1" fill="#000000"/><rect x="7" y="10" width="6" height="1" fill="#C8C8C8"/><rect x="13" y="10" width="2" height="1" fill="#000000"/><rect x="1" y="11" width="2" height="1" fill="#A0A0A0"/><rect x="3" y="11" width="4" height="1" fill="#E0E860"/><rect x="7" y="11" width="1" height="1" fill="#000000"/><rect x="8" y="11" width="5" height="1" fill="#C8C8C8"/><rect x="13" y="11" width="2" height="1" fill="#000000"/><rect x="1" y="12" width="4" height="1" fill="#A0A0A0"/><rect x="5" y="12" width="2" height="1" fill="#E0E860"/><rect x="7" y="12" width="1" height="1" fill="#000000"/><rect x="8" y="12" width="5" height="1" fill="#C8C8C8"/><rect x="13" y="12" width="2" height="1" fill="#000000"/><rect x="1" y="13" width="5" height="1" fill="#A0A0A0"/><rect x="6" y="13" width="2" height="1" fill="#E0E860"/><rect x="8" y="13" width="1" height="1" fill="#000000"/><rect x="9" y="13" width="4" height="1" fill="#C8C8C8"/><rect x="13" y="13" width="2" height="1" fill="#000000"/><rect x="2" y="14" width="5" height="1" fill="#000000"/><rect x="7" y="14" width="2" height="1" fill="#E0E860"/><rect x="9" y="14" width="5" height="1" fill="#000000"/><rect x="7" y="15" width="3" height="1" fill="#000000"/></symbol>
<symbol id="ico-user" viewBox="0 0 16 16"><rect x="7" y="0" width="7" height="1" fill="#000000"/><rect x="5" y="1" width="10" height="1" fill="#000000"/><rect x="4" y="2" width="11" height="1" fill="#000000"/><rect x="4" y="3" width="5" height="1" fill="#000000"/><rect x="9" y="3" width="3" height="1" fill="#F4F4F4"/><rect x="12" y="3" width="3" height="1" fill="#000000"/><rect x="4" y="4" width="4" height="1" fill="#000000"/><rect x="8" y="4" width="4" height="1" fill="#F4F4F4"/><rect x="12" y="4" width="1" height="1" fill="#000000"/><rect x="13" y="4" width="1" height="1" fill="#F4F4F4"/><rect x="14" y="4" width="1" height="1" fill="#000000"/><rect x="4" y="5" width="3" height="1" fill="#000000"/><rect x="7" y="5" width="6" height="1" fill="#F4F4F4"/><rect x="13" y="5" width="2" height="1" fill="#000000"/><rect x="1" y="6" width="1" height="1" fill="#000000"/><rect x="4" y="6" width="3" height="1" fill="#000000"/><rect x="7" y="6" width="5" height="1" fill="#F4F4F4"/><rect x="12" y="6" width="2" height="1" fill="#000000"/><rect x="0" y="7" width="1" height="1" fill="#000000"/><rect x="1" y="7" width="1" height="1" fill="#DCDC60"/><rect x="2" y="7" width="1" height="1" fill="#000000"/><rect x="4" y="7" width="3" height="1" fill="#000000"/><rect x="7" y="7" width="5" height="1" fill="#F4F4F4"/><rect x="12" y="7" width="1" height="1" fill="#000000"/><rect x="0" y="8" width="1" height="1" fill="#000000"/><rect x="1" y="8" width="2" height="1" fill="#DCDC60"/><rect x="3" y="8" width="2" height="1" fill="#000000"/><rect x="5" y="8" width="1" height="1" fill="#DCDC60"/><rect x="6" y="8" width="2" height="1" fill="#000000"/><rect x="8" y="8" width="4" height="1" fill="#F4F4F4"/><rect x="12" y="8" width="1" height="1" fill="#000000"/><rect x="1" y="9" width="1" height="1" fill="#000000"/><rect x="2" y="9" width="5" height="1" fill="#DCDC60"/><rect x="7" y="9" width="2" height="1" fill="#000000"/><rect x="9" y="9" width="2" height="1" fill="#F4F4F4"/><rect x="11" y="9" width="1" height="1" fill="#000000"/><rect x="0" y="10" width="2" height="1" fill="#000000"/><rect x="2" y="10" width="2" height="1" fill="#DCDC60"/><rect x="4" y="10" width="2" height="1" fill="#000000"/><rect x="6" y="10" width="2" height="1" fill="#DCDC60"/><rect x="8" y="10" width="1" height="1" fill="#000000"/><rect x="9" y="10" width="1" height="1" fill="#F4F4F4"/><rect x="10" y="10" width="3" height="1" fill="#000060"/><rect x="0" y="11" width="1" height="1" fill="#000000"/><rect x="1" y="11" width="2" height="1" fill="#DCDC60"/><rect x="3" y="11" width="1" height="1" fill="#000000"/><rect x="4" y="11" width="2" height="1" fill="#F4F4F4"/><rect x="6" y="11" width="1" height="1" fill="#000000"/><rect x="7" y="11" width="1" height="1" fill="#DCDC60"/><rect x="8" y="11" width="1" height="1" fill="#000000"/><rect x="9" y="11" width="5" height="1" fill="#000060"/><rect x="1" y="12" width="1" height="1" fill="#000000"/><rect x="2" y="12" width="2" height="1" fill="#DCDC60"/><rect x="4" y="12" width="1" height="1" fill="#000000"/><rect x="5" y="12" width="1" height="1" fill="#F4F4F4"/><rect x="6" y="12" width="2" height="1" fill="#DCDC60"/><rect x="8" y="12" width="1" height="1" fill="#000000"/><rect x="9" y="12" width="5" height="1" fill="#000060"/><rect x="14" y="12" width="1" height="1" fill="#000000"/><rect x="0" y="13" width="1" height="1" fill="#000000"/><rect x="1" y="13" width="6" height="1" fill="#DCDC60"/><rect x="7" y="13" width="1" height="1" fill="#000000"/><rect x="8" y="13" width="6" height="1" fill="#000060"/><rect x="1" y="14" width="2" height="1" fill="#000000"/><rect x="3" y="14" width="2" height="1" fill="#DCDC60"/><rect x="5" y="14" width="1" height="1" fill="#000000"/><rect x="6" y="14" width="2" height="1" fill="#DCDC60"/><rect x="8" y="14" width="1" height="1" fill="#000000"/><rect x="3" y="15" width="2" height="1" fill="#000000"/><rect x="6" y="15" width="2" height="1" fill="#000000"/></symbol>
<symbol id="tb-back" viewBox="0 0 16 16">
<path d="M1.5 5.5 L6.5 0.5 V3.5 H13.5 V7.5 H6.5 V10.5 Z" fill="#40D8D0" stroke="#000" stroke-width="1" stroke-linejoin="miter"/>
<path d="M3 5.5 L6 2.5 V4.5 H12.5" fill="none" stroke="#A0FFF8" stroke-width="1"/>
</symbol>
<symbol id="tb-fwd" viewBox="0 0 16 16">
<path d="M8.5 10.5 L13.5 5.5" stroke="#fff" stroke-width="1" fill="none" transform="translate(0.7,0.7)"/>
<path d="M1.5 8 H8.5" stroke="#fff" stroke-width="1" fill="none"/>
<path d="M13.5 5.5 L8.5 0.5 V3.5 H1.5 V7.5 H8.5 V10.5 Z" fill="#808080"/>
</symbol>
<symbol id="tb-up" viewBox="0 0 16 16">
<path d="M1.5 2.5 Q1.5 1.5 2.5 1.5 H6.5 L7.5 2.5 V3.5 H14.5 V13.5 H0.5 V3.5 H1.5 Z" fill="#F0F0A0" stroke="#000" stroke-width="1"/>
<rect x="1" y="4" width="13" height="1" fill="#FFFFD8"/>
<path d="M3 7 L6 4 L9 7 Z" fill="#000"/>
<rect x="5" y="6" width="2" height="5" fill="#000"/>
<rect x="5" y="9" width="7" height="2" fill="#000"/>
</symbol>
<symbol id="tb-tree" viewBox="0 0 14 12">
<rect x="0" y="0" width="14" height="12" fill="#000070"/>
<rect x="1" y="2" width="4" height="9" fill="#F8F8FF"/>
<rect x="6" y="2" width="7" height="9" fill="#C4C4F0"/>
<g fill="#000070"><rect x="2" y="4" width="2" height="1"/><rect x="2" y="6" width="2" height="1"/><rect x="2" y="8" width="2" height="1"/></g>
<path d="M10 3.5 V8.5 L7.5 6 Z" fill="#000"/>
</symbol>
<symbol id="tb-export" viewBox="0 0 17 17">
<rect x="0.5" y="0.5" width="12" height="13" fill="#fff" stroke="#000" stroke-width="1"/>
<g fill="#000"><rect x="2" y="2.5" width="1.5" height="1.5"/><rect x="2" y="5.5" width="1.5" height="1.5"/><rect x="2" y="8.5" width="1.5" height="1.5"/>
<rect x="5" y="3" width="6" height="1"/><rect x="5" y="6" width="3" height="1"/></g>
<path d="M9.5 7.5 H13.5 L16.5 10.5 V13.5 L13.5 16.5 H9.5 L6.5 13.5 V10.5 Z" fill="#fff" stroke="#000" stroke-width="1"/>
<path d="M8 11 H11 V9 L14 12 L11 15 V13 H8 Z" fill="#000"/>
</symbol>
<symbol id="tb-help" viewBox="0 0 16 16"><rect x="6" y="0" width="5" height="1" fill="#000000"/><rect x="5" y="1" width="1" height="1" fill="#000000"/><rect x="6" y="1" width="2" height="1" fill="#F0F8A0"/><rect x="8" y="1" width="3" height="1" fill="#C8DC40"/><rect x="11" y="1" width="1" height="1" fill="#000000"/><rect x="4" y="2" width="1" height="1" fill="#000000"/><rect x="5" y="2" width="1" height="1" fill="#F0F8A0"/><rect x="6" y="2" width="1" height="1" fill="#F4F4F4"/><rect x="7" y="2" width="2" height="1" fill="#000000"/><rect x="9" y="2" width="3" height="1" fill="#C8DC40"/><rect x="12" y="2" width="1" height="1" fill="#000000"/><rect x="4" y="3" width="1" height="1" fill="#000000"/><rect x="5" y="3" width="1" height="1" fill="#F4F4F4"/><rect x="6" y="3" width="1" height="1" fill="#000000"/><rect x="9" y="3" width="1" height="1" fill="#000000"/><rect x="10" y="3" width="2" height="1" fill="#C8DC40"/><rect x="12" y="3" width="1" height="1" fill="#000000"/><rect x="0" y="4" width="6" height="1" fill="#000000"/><rect x="9" y="4" width="1" height="1" fill="#000000"/><rect x="10" y="4" width="2" height="1" fill="#C8DC40"/><rect x="12" y="4" width="1" height="1" fill="#000000"/><rect x="0" y="5" width="1" height="1" fill="#000000"/><rect x="1" y="5" width="5" height="1" fill="#F4F4F4"/><rect x="6" y="5" width="1" height="1" fill="#000000"/><rect x="8" y="5" width="1" height="1" fill="#000000"/><rect x="9" y="5" width="3" height="1" fill="#C8DC40"/><rect x="12" y="5" width="1" height="1" fill="#000000"/><rect x="0" y="6" width="1" height="1" fill="#000000"/><rect x="1" y="6" width="6" height="1" fill="#F4F4F4"/><rect x="7" y="6" width="1" height="1" fill="#000000"/><rect x="8" y="6" width="3" height="1" fill="#C8DC40"/><rect x="11" y="6" width="1" height="1" fill="#000000"/><rect x="0" y="7" width="1" height="1" fill="#000000"/><rect x="1" y="7" width="1" height="1" fill="#F4F4F4"/><rect x="2" y="7" width="4" height="1" fill="#909090"/><rect x="6" y="7" width="1" height="1" fill="#F4F4F4"/><rect x="7" y="7" width="1" height="1" fill="#000000"/><rect x="8" y="7" width="2" height="1" fill="#C8DC40"/><rect x="10" y="7" width="1" height="1" fill="#000000"/><rect x="0" y="8" width="1" height="1" fill="#000000"/><rect x="1" y="8" width="6" height="1" fill="#F4F4F4"/><rect x="7" y="8" width="1" height="1" fill="#000000"/><rect x="8" y="8" width="2" height="1" fill="#C8DC40"/><rect x="10" y="8" width="1" height="1" fill="#000000"/><rect x="0" y="9" width="1" height="1" fill="#000000"/><rect x="1" y="9" width="1" height="1" fill="#F4F4F4"/><rect x="2" y="9" width="4" height="1" fill="#909090"/><rect x="6" y="9" width="2" height="1" fill="#F4F4F4"/><rect x="8" y="9" width="3" height="1" fill="#000000"/><rect x="0" y="10" width="1" height="1" fill="#000000"/><rect x="1" y="10" width="6" height="1" fill="#F4F4F4"/><rect x="7" y="10" width="1" height="1" fill="#000000"/><rect x="8" y="10" width="3" height="1" fill="#F4F4F4"/><rect x="11" y="10" width="1" height="1" fill="#000000"/><rect x="0" y="11" width="1" height="1" fill="#000000"/><rect x="1" y="11" width="1" height="1" fill="#F4F4F4"/><rect x="2" y="11" width="4" height="1" fill="#909090"/><rect x="6" y="11" width="1" height="1" fill="#F4F4F4"/><rect x="7" y="11" width="1" height="1" fill="#000000"/><rect x="8" y="11" width="3" height="1" fill="#F4F4F4"/><rect x="11" y="11" width="1" height="1" fill="#000000"/><rect x="0" y="12" width="1" height="1" fill="#000000"/><rect x="1" y="12" width="6" height="1" fill="#F4F4F4"/><rect x="7" y="12" width="5" height="1" fill="#000000"/><rect x="0" y="13" width="1" height="1" fill="#000000"/><rect x="1" y="13" width="8" height="1" fill="#F4F4F4"/><rect x="9" y="13" width="1" height="1" fill="#000000"/><rect x="0" y="14" width="10" height="1" fill="#000000"/></symbol>
<symbol id="title-ico" viewBox="0 0 16 16">
<path d="M1 1 H5 V2 H7 L9 1 L11 3 L13 5 L12 5 L10 3 H7 V5 H4 V3 H1 Z" fill="#E0E0E8"/>
<rect x="5" y="6" width="1" height="3" fill="#fff"/>
<path d="M4 9 H8 V16 H4 Z" fill="#C8D850"/>
<rect x="3" y="10" width="1" height="5" fill="#606020"/>
<rect x="8" y="8" width="8" height="8" fill="#000"/>
<rect x="9" y="9" width="7" height="6" fill="#F8E8F0"/>
<rect x="10" y="10" width="1" height="5" fill="#801010"/><rect x="12" y="10" width="1" height="5" fill="#801010"/>
<rect x="8" y="7" width="7" height="1" fill="#C0C0D0"/>
</symbol>
</defs></svg>
<div style="position:absolute;left:1px;top:2px;width:1022px;height:782px;background:#D0D0C8"></div>
<div style="position:absolute;left:1px;top:2px;width:1022px;height:1px;background:#FFFFFF"></div>
<div style="position:absolute;left:1px;top:3px;width:1022px;height:1px;background:#F4F3F0"></div>
<div style="position:absolute;left:1px;top:2px;width:1px;height:782px;background:#FFFFFF"></div>
<div style="position:absolute;left:2px;top:2px;width:1px;height:782px;background:#F4F3F0"></div>
<div style="position:absolute;left:5px;top:6px;width:1018px;height:18px;background:linear-gradient(to right,#0A246A,#A6CAF0)"></div>
<div class="t" style="left:24px;top:9px;color:#fff;font-weight:bold;letter-spacing:0.24px;-webkit-text-stroke:0.2px #fff">Group Policy Object Editor</div>
<div style="position:absolute;left:969px;top:8px;width:16px;height:14px;background:#D0D0C8;box-shadow:inset -1px -1px #404040, inset 1px 1px #FFFFFF, inset -2px -2px #808080, inset 2px 2px #D0D0C8"></div>
<div style="position:absolute;left:973px;top:17px;width:6px;height:2px;background:#000"></div>
<div style="position:absolute;left:985px;top:8px;width:16px;height:14px;background:#D0D0C8;box-shadow:inset -1px -1px #404040, inset 1px 1px #FFFFFF, inset -2px -2px #808080, inset 2px 2px #D0D0C8"></div>
<div style="position:absolute;left:988px;top:10px;width:9px;height:9px;box-sizing:border-box;border:1px solid #000;border-top-width:2px"></div>
<div style="position:absolute;left:1003px;top:8px;width:16px;height:14px;background:#D0D0C8;box-shadow:inset -1px -1px #404040, inset 1px 1px #FFFFFF, inset -2px -2px #808080, inset 2px 2px #D0D0C8"></div>
<svg style="position:absolute;left:1003px;top:8px" width="16" height="14"><path d="M4 3 L11 10 M5 3 L12 10 M11 3 L4 10 M12 3 L5 10" stroke="#000" stroke-width="1" shape-rendering="crispEdges"/></svg>
<div style="position:absolute;left:5px;top:25px;width:1016px;height:1px;background:#808080"></div>
<div style="position:absolute;left:6px;top:26px;width:1015px;height:1px;background:#FFFFFF"></div>
<div style="position:absolute;left:5px;top:25px;width:1px;height:50px;background:#808080"></div>
<div style="position:absolute;left:6px;top:26px;width:1px;height:49px;background:#FFFFFF"></div>
<div style="position:absolute;left:5px;top:49px;width:1015px;height:1px;background:#808080"></div>
<div style="position:absolute;left:5px;top:50px;width:1016px;height:1px;background:#FFFFFF"></div>
<div style="position:absolute;left:5px;top:73px;width:1015px;height:1px;background:#808080"></div>
<div style="position:absolute;left:5px;top:74px;width:1016px;height:1px;background:#FFFFFF"></div>
<div style="position:absolute;left:1019px;top:25px;width:1px;height:49px;background:#808080"></div>
<div style="position:absolute;left:1020px;top:25px;width:1px;height:50px;background:#FFFFFF"></div>
<div class="t" style="left:14px;top:32px;"><u style="text-underline-offset:1px">К</u>онсоль</div>
<div class="t" style="left:73px;top:32px;"><u style="text-underline-offset:1px">Д</u>ействие</div>
<div class="t" style="left:137px;top:32px;"><u style="text-underline-offset:1px">В</u>ид</div>
<div class="t" style="left:172px;top:32px;"><u style="text-underline-offset:1px">С</u>правка</div>
<svg style="position:absolute;left:6px;top:7px" width="16" height="16" viewBox="0 0 16 16"><use href="#title-ico"/></svg>
<svg style="position:absolute;left:11px;top:57px" width="16" height="16" viewBox="0 0 16 16"><use href="#tb-back"/></svg>
<svg style="position:absolute;left:34px;top:57px" width="16" height="16" viewBox="0 0 16 16"><use href="#tb-fwd"/></svg>
<div style="position:absolute;left:56px;top:53px;width:1px;height:19px;background:#808080"></div>
<div style="position:absolute;left:57px;top:53px;width:1px;height:19px;background:#FFFFFF"></div>
<svg style="position:absolute;left:65px;top:54px" width="16" height="16" viewBox="0 0 16 16"><use href="#tb-up"/></svg>
<div style="position:absolute;left:84px;top:51px;width:23px;height:22px;background:repeating-conic-gradient(#fff 0 25%, #D0D0C8 0 50%) 0 0/2px 2px"></div>
<div style="position:absolute;left:84px;top:51px;width:23px;height:1px;background:#808080"></div>
<div style="position:absolute;left:84px;top:51px;width:1px;height:22px;background:#808080"></div>
<div style="position:absolute;left:84px;top:72px;width:23px;height:1px;background:#FFFFFF"></div>
<div style="position:absolute;left:106px;top:51px;width:1px;height:22px;background:#FFFFFF"></div>
<svg style="position:absolute;left:89px;top:56px" width="14" height="12" viewBox="0 0 14 12"><use href="#tb-tree"/></svg>
<div style="position:absolute;left:110px;top:53px;width:1px;height:19px;background:#808080"></div>
<div style="position:absolute;left:111px;top:53px;width:1px;height:19px;background:#FFFFFF"></div>
<svg style="position:absolute;left:118px;top:54px" width="17" height="17" viewBox="0 0 17 17"><use href="#tb-export"/></svg>
<div style="position:absolute;left:141px;top:53px;width:1px;height:19px;background:#808080"></div>
<div style="position:absolute;left:142px;top:53px;width:1px;height:19px;background:#FFFFFF"></div>
<svg style="position:absolute;left:150px;top:54px" width="16" height="16" viewBox="0 0 16 16"><use href="#tb-help"/></svg>
<div style="position:absolute;left:5px;top:77px;width:338px;height:1px;background:#808080"></div>
<div style="position:absolute;left:5px;top:77px;width:1px;height:684px;background:#808080"></div>
<div style="position:absolute;left:5px;top:760px;width:338px;height:1px;background:#FFFFFF"></div>
<div style="position:absolute;left:342px;top:77px;width:1px;height:684px;background:#FFFFFF"></div>
<div style="position:absolute;left:6px;top:78px;width:336px;height:1px;background:#404040"></div>
<div style="position:absolute;left:6px;top:78px;width:1px;height:682px;background:#404040"></div>
<div style="position:absolute;left:6px;top:759px;width:336px;height:1px;background:#D0D0C8"></div>
<div style="position:absolute;left:341px;top:78px;width:1px;height:682px;background:#D0D0C8"></div>
<div style="position:absolute;left:7px;top:79px;width:334px;height:680px;background:#F8F8F8"></div>
<div style="position:absolute;left:346px;top:77px;width:675px;height:1px;background:#808080"></div>
<div style="position:absolute;left:346px;top:77px;width:1px;height:684px;background:#808080"></div>
<div style="position:absolute;left:346px;top:760px;width:675px;height:1px;background:#FFFFFF"></div>
<div style="position:absolute;left:1020px;top:77px;width:1px;height:684px;background:#FFFFFF"></div>
<div style="position:absolute;left:347px;top:78px;width:673px;height:1px;background:#404040"></div>
<div style="position:absolute;left:347px;top:78px;width:1px;height:682px;background:#404040"></div>
<div style="position:absolute;left:347px;top:759px;width:673px;height:1px;background:#D0D0C8"></div>
<div style="position:absolute;left:1019px;top:78px;width:1px;height:682px;background:#D0D0C8"></div>
<div style="position:absolute;left:348px;top:79px;width:671px;height:680px;background:#F8F8F8"></div>
<div style="position:absolute;left:5px;top:763px;width:797px;height:1px;background:#808080"></div>
<div style="position:absolute;left:5px;top:763px;width:1px;height:18px;background:#808080"></div>
<div style="position:absolute;left:5px;top:780px;width:797px;height:1px;background:#FFFFFF"></div>
<div style="position:absolute;left:801px;top:763px;width:1px;height:18px;background:#FFFFFF"></div>
<div style="position:absolute;left:803px;top:763px;width:132px;height:1px;background:#808080"></div>
<div style="position:absolute;left:803px;top:763px;width:1px;height:18px;background:#808080"></div>
<div style="position:absolute;left:803px;top:780px;width:132px;height:1px;background:#FFFFFF"></div>
<div style="position:absolute;left:934px;top:763px;width:1px;height:18px;background:#FFFFFF"></div>
<div style="position:absolute;left:936px;top:763px;width:83px;height:1px;background:#808080"></div>
<div style="position:absolute;left:936px;top:763px;width:1px;height:18px;background:#808080"></div>
<div style="position:absolute;left:936px;top:780px;width:83px;height:1px;background:#FFFFFF"></div>
<div style="position:absolute;left:1018px;top:763px;width:1px;height:18px;background:#FFFFFF"></div>
<div style="position:absolute;left:348px;top:79px;width:317px;height:17px;background:#D0D0C8;box-shadow:inset -1px -1px #404040, inset 1px 1px #FFFFFF, inset -2px -2px #808080"></div>
<div class="t" style="left:353px;top:82px;">Политика</div>
<div style="position:absolute;left:665px;top:79px;width:190px;height:17px;background:#D0D0C8;box-shadow:inset -1px -1px #404040, inset 1px 1px #FFFFFF, inset -2px -2px #808080"></div>
<div class="t" style="left:670px;top:82px;">Параметр политики</div>
<div style="position:absolute;left:855px;top:79px;width:164px;height:17px;background:#D0D0C8;box-shadow:inset 0 -1px #404040, inset 1px 1px #FFFFFF, inset 0 -2px #808080"></div>
<svg style="position:absolute;left:414px;top:83px" width="12" height="10"><path d="M1.5 8.5 L5.5 1.5" stroke="#808080" fill="none"/><path d="M5.5 1.5 L9.5 8.5 H1.5" stroke="#fff" fill="none"/></svg>
<svg style="position:absolute;left:352px;top:96px" width="16" height="16" viewBox="0 0 16 16"><use href="#ico-list"/></svg>
<div class="t" style="left:370px;top:99px;">Архивирование файлов и каталогов</div>
<div class="t" style="left:670px;top:99px;">Не определено</div>
<svg style="position:absolute;left:352px;top:113px" width="16" height="16" viewBox="0 0 16 16"><use href="#ico-list"/></svg>
<div class="t" style="left:370px;top:116px;letter-spacing:-0.044px">Восстановление файлов и каталогов</div>
<div class="t" style="left:670px;top:116px;">Не определено</div>
<svg style="position:absolute;left:352px;top:130px" width="16" height="16" viewBox="0 0 16 16"><use href="#ico-list"/></svg>
<div class="t" style="left:370px;top:133px;letter-spacing:0.181px">Вход в качестве пакетного задания</div>
<div class="t" style="left:670px;top:133px;">Не определено</div>
<svg style="position:absolute;left:352px;top:147px" width="16" height="16" viewBox="0 0 16 16"><use href="#ico-list"/></svg>
<div class="t" style="left:370px;top:150px;letter-spacing:0.090px">Вход в качестве службы</div>
<div class="t" style="left:670px;top:150px;">Не определено</div>
<svg style="position:absolute;left:352px;top:164px" width="16" height="16" viewBox="0 0 16 16"><use href="#ico-list"/></svg>
<div class="t" style="left:370px;top:167px;">Добавление рабочих станций к домену</div>
<div class="t" style="left:670px;top:167px;">Не определено</div>
<svg style="position:absolute;left:352px;top:181px" width="16" height="16" viewBox="0 0 16 16"><use href="#ico-list"/></svg>
<div class="t" style="left:370px;top:184px;letter-spacing:0.188px">Доступ к компьютеру из сети</div>
<div class="t" style="left:670px;top:184px;">Не определено</div>
<svg style="position:absolute;left:352px;top:198px" width="16" height="16" viewBox="0 0 16 16"><use href="#ico-list"/></svg>
<div class="t" style="left:370px;top:201px;letter-spacing:-0.125px">Завершение работы системы</div>
<div class="t" style="left:670px;top:201px;">Не определено</div>
<svg style="position:absolute;left:352px;top:215px" width="16" height="16" viewBox="0 0 16 16"><use href="#ico-list"/></svg>
<div class="t" style="left:370px;top:218px;letter-spacing:0.145px">Загрузка и выгрузка драйверов устройств</div>
<div class="t" style="left:670px;top:218px;">Не определено</div>
<svg style="position:absolute;left:352px;top:232px" width="16" height="16" viewBox="0 0 16 16"><use href="#ico-list"/></svg>
<div class="t" style="left:370px;top:235px;letter-spacing:-0.048px">Закрепление страниц в памяти</div>
<div class="t" style="left:670px;top:235px;">Не определено</div>
<svg style="position:absolute;left:352px;top:249px" width="16" height="16" viewBox="0 0 16 16"><use href="#ico-list"/></svg>
<div class="t" style="left:370px;top:252px;letter-spacing:-0.179px">Замена маркера уровня процесса</div>
<div class="t" style="left:670px;top:252px;">Не определено</div>
<svg style="position:absolute;left:352px;top:266px" width="16" height="16" viewBox="0 0 16 16"><use href="#ico-list"/></svg>
<div class="t" style="left:370px;top:269px;">Запретить вход в систему через службу терминалов</div>
<div class="t" style="left:670px;top:269px;">Не определено</div>
<svg style="position:absolute;left:352px;top:283px" width="16" height="16" viewBox="0 0 16 16"><use href="#ico-list"/></svg>
<div class="t" style="left:370px;top:286px;letter-spacing:-0.046px">Запуск операций по обслуживанию тома</div>
<div class="t" style="left:670px;top:286px;">Не определено</div>
<svg style="position:absolute;left:352px;top:300px" width="16" height="16" viewBox="0 0 16 16"><use href="#ico-list"/></svg>
<div class="t" style="left:370px;top:303px;letter-spacing:0.063px">Извлечение компьютера из стыковочного узла</div>
<div class="t" style="left:670px;top:303px;">Не определено</div>
<svg style="position:absolute;left:352px;top:317px" width="16" height="16" viewBox="0 0 16 16"><use href="#ico-list"/></svg>
<div class="t" style="left:370px;top:320px;letter-spacing:-0.089px">Изменение параметров среды оборудования</div>
<div class="t" style="left:670px;top:320px;">Не определено</div>
<svg style="position:absolute;left:352px;top:334px" width="16" height="16" viewBox="0 0 16 16"><use href="#ico-list"/></svg>
<div class="t" style="left:370px;top:337px;letter-spacing:-0.230px">Изменение системного времени</div>
<svg style="position:absolute;left:352px;top:351px" width="16" height="16" viewBox="0 0 16 16"><use href="#ico-list"/></svg>
<div class="t" style="left:370px;top:354px;">Локальный вход в систему</div>
<div class="t" style="left:670px;top:354px;">Не определено</div>
<svg style="position:absolute;left:352px;top:368px" width="16" height="16" viewBox="0 0 16 16"><use href="#ico-list"/></svg>
<div class="t" style="left:370px;top:371px;">Настройка квот памяти для процесса</div>
<div class="t" style="left:670px;top:371px;">Не определено</div>
<svg style="position:absolute;left:352px;top:385px" width="16" height="16" viewBox="0 0 16 16"><use href="#ico-list"/></svg>
<div class="t" style="left:370px;top:388px;letter-spacing:0.104px">Обход перекрестной проверки</div>
<div class="t" style="left:670px;top:388px;">Не определено</div>
<svg style="position:absolute;left:352px;top:402px" width="16" height="16" viewBox="0 0 16 16"><use href="#ico-list"/></svg>
<div class="t" style="left:370px;top:405px;letter-spacing:-0.169px">Овладение файлами или иными объектами</div>
<div class="t" style="left:670px;top:405px;">Не определено</div>
<svg style="position:absolute;left:352px;top:419px" width="16" height="16" viewBox="0 0 16 16"><use href="#ico-list"/></svg>
<div class="t" style="left:370px;top:422px;">Олицетворение клиента после проверки подлинности</div>
<div class="t" style="left:670px;top:422px;">Не определено</div>
<svg style="position:absolute;left:352px;top:436px" width="16" height="16" viewBox="0 0 16 16"><use href="#ico-list"/></svg>
<div class="t" style="left:370px;top:439px;letter-spacing:0.186px">Отказ в доступе к компьютеру из сети</div>
<div class="t" style="left:670px;top:439px;">Не определено</div>
<svg style="position:absolute;left:352px;top:453px" width="16" height="16" viewBox="0 0 16 16"><use href="#ico-list"/></svg>
<div class="t" style="left:370px;top:456px;letter-spacing:0.179px">Отказ во входе в качестве пакетного задания</div>
<div class="t" style="left:670px;top:456px;">Не определено</div>
<svg style="position:absolute;left:352px;top:470px" width="16" height="16" viewBox="0 0 16 16"><use href="#ico-list"/></svg>
<div class="t" style="left:370px;top:473px;letter-spacing:0.159px">Отказать во входе в качестве службы</div>
<div class="t" style="left:670px;top:473px;">Не определено</div>
<svg style="position:absolute;left:352px;top:487px" width="16" height="16" viewBox="0 0 16 16"><use href="#ico-list"/></svg>
<div class="t" style="left:370px;top:490px;letter-spacing:0.091px">Отклонить локальный вход</div>
<div class="t" style="left:670px;top:490px;">Не определено</div>
<svg style="position:absolute;left:352px;top:504px" width="16" height="16" viewBox="0 0 16 16"><use href="#ico-list"/></svg>
<div class="t" style="left:370px;top:507px;">Отладка программ</div>
<div class="t" style="left:670px;top:507px;">Не определено</div>
<svg style="position:absolute;left:352px;top:521px" width="16" height="16" viewBox="0 0 16 16"><use href="#ico-list"/></svg>
<div class="t" style="left:370px;top:524px;">Принудительное удаленное завершение</div>
<div class="t" style="left:670px;top:524px;">Не определено</div>
<svg style="position:absolute;left:352px;top:538px" width="16" height="16" viewBox="0 0 16 16"><use href="#ico-list"/></svg>
<div class="t" style="left:370px;top:541px;letter-spacing:-0.091px">Профилирование загруженности системы</div>
<div class="t" style="left:670px;top:541px;">Не определено</div>
<svg style="position:absolute;left:352px;top:555px" width="16" height="16" viewBox="0 0 16 16"><use href="#ico-list"/></svg>
<div class="t" style="left:370px;top:558px;letter-spacing:-0.117px">Профилирование одного процесса</div>
<div class="t" style="left:670px;top:558px;">Не определено</div>
<svg style="position:absolute;left:352px;top:572px" width="16" height="16" viewBox="0 0 16 16"><use href="#ico-list"/></svg>
<div class="t" style="left:370px;top:575px;letter-spacing:-0.114px">Работа в режиме операционной системы</div>
<div class="t" style="left:670px;top:575px;">Не определено</div>
<svg style="position:absolute;left:352px;top:589px" width="16" height="16" viewBox="0 0 16 16"><use href="#ico-list"/></svg>
<div class="t" style="left:370px;top:592px;letter-spacing:-0.036px">Разрешать вход в систему через службу терминалов</div>
<div class="t" style="left:670px;top:592px;">Не определено</div>
<svg style="position:absolute;left:352px;top:606px" width="16" height="16" viewBox="0 0 16 16"><use href="#ico-list"/></svg>
<div class="t" style="left:370px;top:609px;">Разрешение доверия к учетным записям при делегиро...</div>
<div class="t" style="left:670px;top:609px;">Не определено</div>
<svg style="position:absolute;left:352px;top:623px" width="16" height="16" viewBox="0 0 16 16"><use href="#ico-list"/></svg>
<div class="t" style="left:370px;top:626px;letter-spacing:0.031px">Синхронизация данных службы каталогов</div>
<div class="t" style="left:670px;top:626px;">Не определено</div>
<svg style="position:absolute;left:352px;top:640px" width="16" height="16" viewBox="0 0 16 16"><use href="#ico-list"/></svg>
<div class="t" style="left:370px;top:643px;letter-spacing:0.089px">Создание глобальных объектов</div>
<div class="t" style="left:670px;top:643px;">Не определено</div>
<svg style="position:absolute;left:352px;top:657px" width="16" height="16" viewBox="0 0 16 16"><use href="#ico-list"/></svg>
<div class="t" style="left:370px;top:660px;">Создание журналов безопасности</div>
<div class="t" style="left:670px;top:660px;">Не определено</div>
<svg style="position:absolute;left:352px;top:674px" width="16" height="16" viewBox="0 0 16 16"><use href="#ico-list"/></svg>
<div class="t" style="left:370px;top:677px;">Создание маркерного объекта</div>
<div class="t" style="left:670px;top:677px;">Не определено</div>
<svg style="position:absolute;left:352px;top:691px" width="16" height="16" viewBox="0 0 16 16"><use href="#ico-list"/></svg>
<div class="t" style="left:370px;top:694px;letter-spacing:0.075px">Создание постоянных объектов совместного использо...</div>
<div class="t" style="left:670px;top:694px;">Не определено</div>
<svg style="position:absolute;left:352px;top:708px" width="16" height="16" viewBox="0 0 16 16"><use href="#ico-list"/></svg>
<div class="t" style="left:370px;top:711px;letter-spacing:-0.064px">Создание страничного файла</div>
<div class="t" style="left:670px;top:711px;">Не определено</div>
<svg style="position:absolute;left:352px;top:725px" width="16" height="16" viewBox="0 0 16 16"><use href="#ico-list"/></svg>
<div class="t" style="left:370px;top:728px;letter-spacing:0.094px">Увеличение приоритета диспетчирования</div>
<div class="t" style="left:670px;top:728px;">Не определено</div>
<svg style="position:absolute;left:352px;top:742px" width="16" height="16" viewBox="0 0 16 16"><use href="#ico-list"/></svg>
<div class="t" style="left:370px;top:745px;letter-spacing:-0.032px">Управление аудитом и журналом безопасности</div>
<div class="t" style="left:670px;top:745px;">Не определено</div>
<div style="position:absolute;left:368px;top:334px;width:487px;height:17px;box-sizing:border-box;border:1px dotted #000"></div>
<div style="position:absolute;left:7px;top:79px;width:334px;height:663px;overflow:hidden">
<svg style="position:absolute;left:3px;top:0px" width="16" height="16" viewBox="0 0 16 16"><use href="#ico-policy"/></svg>
<div class="t" style="left:23px;top:2px;letter-spacing:-0.027px">Политика Default Domain Policy [Server-pdc.fgu.local]</div>
<div style="position:absolute;left:11px;top:24px;width:11px;height:1px;background:repeating-linear-gradient(to right,#808080 0 1px,transparent 1px 2px)"></div>
<div style="position:absolute;left:11px;top:16px;width:1px;height:17px;background:repeating-linear-gradient(to bottom,#808080 0 1px,transparent 1px 2px)"></div>
<svg style="position:absolute;left:7px;top:20px" width="9" height="9" viewBox="0 0 9 9"><use href="#ico-box-minus"/></svg>
<svg style="position:absolute;left:22px;top:16px" width="16" height="16" viewBox="0 0 16 16"><use href="#ico-computer"/></svg>
<div class="t" style="left:42px;top:18px;letter-spacing:0.105px">Конфигурация компьютера</div>
<div style="position:absolute;left:30px;top:40px;width:11px;height:1px;background:repeating-linear-gradient(to right,#808080 0 1px,transparent 1px 2px)"></div>
<div style="position:absolute;left:30px;top:32px;width:1px;height:17px;background:repeating-linear-gradient(to bottom,#808080 0 1px,transparent 1px 2px)"></div>
<div style="position:absolute;left:11px;top:32px;width:1px;height:16px;background:repeating-linear-gradient(to bottom,#808080 0 1px,transparent 1px 2px)"></div>
<svg style="position:absolute;left:26px;top:36px" width="9" height="9" viewBox="0 0 9 9"><use href="#ico-box-plus"/></svg>
<svg style="position:absolute;left:42px;top:32px" width="16" height="16" viewBox="0 0 16 16"><use href="#ico-folder"/></svg>
<div class="t" style="left:61px;top:34px;letter-spacing:-0.050px">Конфигурация программ</div>
<div style="position:absolute;left:30px;top:56px;width:11px;height:1px;background:repeating-linear-gradient(to right,#808080 0 1px,transparent 1px 2px)"></div>
<div style="position:absolute;left:30px;top:48px;width:1px;height:17px;background:repeating-linear-gradient(to bottom,#808080 0 1px,transparent 1px 2px)"></div>
<div style="position:absolute;left:11px;top:48px;width:1px;height:16px;background:repeating-linear-gradient(to bottom,#808080 0 1px,transparent 1px 2px)"></div>
<svg style="position:absolute;left:26px;top:52px" width="9" height="9" viewBox="0 0 9 9"><use href="#ico-box-minus"/></svg>
<svg style="position:absolute;left:42px;top:48px" width="16" height="16" viewBox="0 0 16 16"><use href="#ico-folder"/></svg>
<div class="t" style="left:61px;top:50px;">Конфигурация Windows</div>
<div style="position:absolute;left:49px;top:72px;width:11px;height:1px;background:repeating-linear-gradient(to right,#808080 0 1px,transparent 1px 2px)"></div>
<div style="position:absolute;left:49px;top:64px;width:1px;height:17px;background:repeating-linear-gradient(to bottom,#808080 0 1px,transparent 1px 2px)"></div>
<div style="position:absolute;left:11px;top:64px;width:1px;height:16px;background:repeating-linear-gradient(to bottom,#808080 0 1px,transparent 1px 2px)"></div>
<div style="position:absolute;left:30px;top:64px;width:1px;height:16px;background:repeating-linear-gradient(to bottom,#808080 0 1px,transparent 1px 2px)"></div>
<svg style="position:absolute;left:60px;top:64px" width="16" height="16" viewBox="0 0 16 16"><use href="#ico-scripts"/></svg>
<div class="t" style="left:80px;top:66px;">Сценарии (запуск/завершение)</div>
<div style="position:absolute;left:49px;top:88px;width:11px;height:1px;background:repeating-linear-gradient(to right,#808080 0 1px,transparent 1px 2px)"></div>
<div style="position:absolute;left:49px;top:80px;width:1px;height:9px;background:repeating-linear-gradient(to bottom,#808080 0 1px,transparent 1px 2px)"></div>
<div style="position:absolute;left:11px;top:80px;width:1px;height:16px;background:repeating-linear-gradient(to bottom,#808080 0 1px,transparent 1px 2px)"></div>
<div style="position:absolute;left:30px;top:80px;width:1px;height:16px;background:repeating-linear-gradient(to bottom,#808080 0 1px,transparent 1px 2px)"></div>
<svg style="position:absolute;left:45px;top:84px" width="9" height="9" viewBox="0 0 9 9"><use href="#ico-box-minus"/></svg>
<svg style="position:absolute;left:60px;top:80px" width="16" height="16" viewBox="0 0 16 16"><use href="#ico-secset"/></svg>
<div class="t" style="left:80px;top:82px;letter-spacing:-0.057px">Параметры безопасности</div>
<div style="position:absolute;left:68px;top:104px;width:11px;height:1px;background:repeating-linear-gradient(to right,#808080 0 1px,transparent 1px 2px)"></div>
<div style="position:absolute;left:68px;top:96px;width:1px;height:17px;background:repeating-linear-gradient(to bottom,#808080 0 1px,transparent 1px 2px)"></div>
<div style="position:absolute;left:11px;top:96px;width:1px;height:16px;background:repeating-linear-gradient(to bottom,#808080 0 1px,transparent 1px 2px)"></div>
<div style="position:absolute;left:30px;top:96px;width:1px;height:16px;background:repeating-linear-gradient(to bottom,#808080 0 1px,transparent 1px 2px)"></div>
<svg style="position:absolute;left:64px;top:100px" width="9" height="9" viewBox="0 0 9 9"><use href="#ico-box-minus"/></svg>
<svg style="position:absolute;left:79px;top:96px" width="16" height="16" viewBox="0 0 16 16"><use href="#ico-secpol2"/></svg>
<div class="t" style="left:99px;top:98px;letter-spacing:0.109px">Политики учетных записей</div>
<div style="position:absolute;left:87px;top:120px;width:11px;height:1px;background:repeating-linear-gradient(to right,#808080 0 1px,transparent 1px 2px)"></div>
<div style="position:absolute;left:87px;top:112px;width:1px;height:17px;background:repeating-linear-gradient(to bottom,#808080 0 1px,transparent 1px 2px)"></div>
<div style="position:absolute;left:11px;top:112px;width:1px;height:16px;background:repeating-linear-gradient(to bottom,#808080 0 1px,transparent 1px 2px)"></div>
<div style="position:absolute;left:30px;top:112px;width:1px;height:16px;background:repeating-linear-gradient(to bottom,#808080 0 1px,transparent 1px 2px)"></div>
<div style="position:absolute;left:68px;top:112px;width:1px;height:16px;background:repeating-linear-gradient(to bottom,#808080 0 1px,transparent 1px 2px)"></div>
<svg style="position:absolute;left:98px;top:112px" width="16" height="16" viewBox="0 0 16 16"><use href="#ico-secpol2"/></svg>
<div class="t" style="left:118px;top:114px;">Политика паролей</div>
<div style="position:absolute;left:87px;top:136px;width:11px;height:1px;background:repeating-linear-gradient(to right,#808080 0 1px,transparent 1px 2px)"></div>
<div style="position:absolute;left:87px;top:128px;width:1px;height:17px;background:repeating-linear-gradient(to bottom,#808080 0 1px,transparent 1px 2px)"></div>
<div style="position:absolute;left:11px;top:128px;width:1px;height:16px;background:repeating-linear-gradient(to bottom,#808080 0 1px,transparent 1px 2px)"></div>
<div style="position:absolute;left:30px;top:128px;width:1px;height:16px;background:repeating-linear-gradient(to bottom,#808080 0 1px,transparent 1px 2px)"></div>
<div style="position:absolute;left:68px;top:128px;width:1px;height:16px;background:repeating-linear-gradient(to bottom,#808080 0 1px,transparent 1px 2px)"></div>
<svg style="position:absolute;left:83px;top:132px" width="9" height="9" viewBox="0 0 9 9"><use href="#ico-box-plus"/></svg>
<svg style="position:absolute;left:98px;top:128px" width="16" height="16" viewBox="0 0 16 16"><use href="#ico-secpol2"/></svg>
<div class="t" style="left:118px;top:130px;letter-spacing:0.106px">Политика блокировки учетной записи</div>
<div style="position:absolute;left:87px;top:152px;width:11px;height:1px;background:repeating-linear-gradient(to right,#808080 0 1px,transparent 1px 2px)"></div>
<div style="position:absolute;left:87px;top:144px;width:1px;height:9px;background:repeating-linear-gradient(to bottom,#808080 0 1px,transparent 1px 2px)"></div>
<div style="position:absolute;left:11px;top:144px;width:1px;height:16px;background:repeating-linear-gradient(to bottom,#808080 0 1px,transparent 1px 2px)"></div>
<div style="position:absolute;left:30px;top:144px;width:1px;height:16px;background:repeating-linear-gradient(to bottom,#808080 0 1px,transparent 1px 2px)"></div>
<div style="position:absolute;left:68px;top:144px;width:1px;height:16px;background:repeating-linear-gradient(to bottom,#808080 0 1px,transparent 1px 2px)"></div>
<svg style="position:absolute;left:83px;top:148px" width="9" height="9" viewBox="0 0 9 9"><use href="#ico-box-plus"/></svg>
<svg style="position:absolute;left:98px;top:144px" width="16" height="16" viewBox="0 0 16 16"><use href="#ico-secpol2"/></svg>
<div class="t" style="left:118px;top:146px;">Политика Kerberos</div>
<div style="position:absolute;left:68px;top:168px;width:11px;height:1px;background:repeating-linear-gradient(to right,#808080 0 1px,transparent 1px 2px)"></div>
<div style="position:absolute;left:68px;top:160px;width:1px;height:17px;background:repeating-linear-gradient(to bottom,#808080 0 1px,transparent 1px 2px)"></div>
<div style="position:absolute;left:11px;top:160px;width:1px;height:16px;background:repeating-linear-gradient(to bottom,#808080 0 1px,transparent 1px 2px)"></div>
<div style="position:absolute;left:30px;top:160px;width:1px;height:16px;background:repeating-linear-gradient(to bottom,#808080 0 1px,transparent 1px 2px)"></div>
<svg style="position:absolute;left:64px;top:164px" width="9" height="9" viewBox="0 0 9 9"><use href="#ico-box-minus"/></svg>
<svg style="position:absolute;left:80px;top:160px" width="16" height="16" viewBox="0 0 16 16"><use href="#ico-secpol"/></svg>
<div class="t" style="left:99px;top:162px;letter-spacing:0.153px">Локальные политики</div>
<div style="position:absolute;left:87px;top:184px;width:11px;height:1px;background:repeating-linear-gradient(to right,#808080 0 1px,transparent 1px 2px)"></div>
<div style="position:absolute;left:87px;top:176px;width:1px;height:17px;background:repeating-linear-gradient(to bottom,#808080 0 1px,transparent 1px 2px)"></div>
<div style="position:absolute;left:11px;top:176px;width:1px;height:16px;background:repeating-linear-gradient(to bottom,#808080 0 1px,transparent 1px 2px)"></div>
<div style="position:absolute;left:30px;top:176px;width:1px;height:16px;background:repeating-linear-gradient(to bottom,#808080 0 1px,transparent 1px 2px)"></div>
<div style="position:absolute;left:68px;top:176px;width:1px;height:16px;background:repeating-linear-gradient(to bottom,#808080 0 1px,transparent 1px 2px)"></div>
<svg style="position:absolute;left:83px;top:180px" width="9" height="9" viewBox="0 0 9 9"><use href="#ico-box-plus"/></svg>
<svg style="position:absolute;left:99px;top:176px" width="16" height="16" viewBox="0 0 16 16"><use href="#ico-secpol"/></svg>
<div class="t" style="left:118px;top:178px;letter-spacing:0.257px">Политика аудита</div>
<div style="position:absolute;left:87px;top:200px;width:11px;height:1px;background:repeating-linear-gradient(to right,#808080 0 1px,transparent 1px 2px)"></div>
<div style="position:absolute;left:87px;top:192px;width:1px;height:17px;background:repeating-linear-gradient(to bottom,#808080 0 1px,transparent 1px 2px)"></div>
<div style="position:absolute;left:11px;top:192px;width:1px;height:16px;background:repeating-linear-gradient(to bottom,#808080 0 1px,transparent 1px 2px)"></div>
<div style="position:absolute;left:30px;top:192px;width:1px;height:16px;background:repeating-linear-gradient(to bottom,#808080 0 1px,transparent 1px 2px)"></div>
<div style="position:absolute;left:68px;top:192px;width:1px;height:16px;background:repeating-linear-gradient(to bottom,#808080 0 1px,transparent 1px 2px)"></div>
<svg style="position:absolute;left:83px;top:196px" width="9" height="9" viewBox="0 0 9 9"><use href="#ico-box-plus"/></svg>
<svg style="position:absolute;left:99px;top:192px" width="16" height="16" viewBox="0 0 16 16"><use href="#ico-secpol"/></svg>
<div style="position:absolute;left:117px;top:192px;width:168px;height:16px;background:#D0D0C8"></div>
<div class="t" style="left:118px;top:194px;letter-spacing:0.078px">Назначение прав пользователя</div>
<div style="position:absolute;left:87px;top:216px;width:11px;height:1px;background:repeating-linear-gradient(to right,#808080 0 1px,transparent 1px 2px)"></div>
<div style="position:absolute;left:87px;top:208px;width:1px;height:9px;background:repeating-linear-gradient(to bottom,#808080 0 1px,transparent 1px 2px)"></div>
<div style="position:absolute;left:11px;top:208px;width:1px;height:16px;background:repeating-linear-gradient(to bottom,#808080 0 1px,transparent 1px 2px)"></div>
<div style="position:absolute;left:30px;top:208px;width:1px;height:16px;background:repeating-linear-gradient(to bottom,#808080 0 1px,transparent 1px 2px)"></div>
<div style="position:absolute;left:68px;top:208px;width:1px;height:16px;background:repeating-linear-gradient(to bottom,#808080 0 1px,transparent 1px 2px)"></div>
<svg style="position:absolute;left:83px;top:212px" width="9" height="9" viewBox="0 0 9 9"><use href="#ico-box-plus"/></svg>
<svg style="position:absolute;left:99px;top:208px" width="16" height="16" viewBox="0 0 16 16"><use href="#ico-secpol"/></svg>
<div class="t" style="left:118px;top:210px;letter-spacing:-0.067px">Параметры безопасности</div>
<div style="position:absolute;left:68px;top:232px;width:11px;height:1px;background:repeating-linear-gradient(to right,#808080 0 1px,transparent 1px 2px)"></div>
<div style="position:absolute;left:68px;top:224px;width:1px;height:17px;background:repeating-linear-gradient(to bottom,#808080 0 1px,transparent 1px 2px)"></div>
<div style="position:absolute;left:11px;top:224px;width:1px;height:16px;background:repeating-linear-gradient(to bottom,#808080 0 1px,transparent 1px 2px)"></div>
<div style="position:absolute;left:30px;top:224px;width:1px;height:16px;background:repeating-linear-gradient(to bottom,#808080 0 1px,transparent 1px 2px)"></div>
<svg style="position:absolute;left:64px;top:228px" width="9" height="9" viewBox="0 0 9 9"><use href="#ico-box-plus"/></svg>
<svg style="position:absolute;left:80px;top:224px" width="16" height="16" viewBox="0 0 16 16"><use href="#ico-secpol"/></svg>
<div class="t" style="left:99px;top:226px;letter-spacing:0.077px">Журнал событий</div>
<div style="position:absolute;left:68px;top:248px;width:11px;height:1px;background:repeating-linear-gradient(to right,#808080 0 1px,transparent 1px 2px)"></div>
<div style="position:absolute;left:68px;top:240px;width:1px;height:17px;background:repeating-linear-gradient(to bottom,#808080 0 1px,transparent 1px 2px)"></div>
<div style="position:absolute;left:11px;top:240px;width:1px;height:16px;background:repeating-linear-gradient(to bottom,#808080 0 1px,transparent 1px 2px)"></div>
<div style="position:absolute;left:30px;top:240px;width:1px;height:16px;background:repeating-linear-gradient(to bottom,#808080 0 1px,transparent 1px 2px)"></div>
<svg style="position:absolute;left:64px;top:244px" width="9" height="9" viewBox="0 0 9 9"><use href="#ico-box-plus"/></svg>
<svg style="position:absolute;left:80px;top:240px" width="16" height="16" viewBox="0 0 16 16"><use href="#ico-lockfolder"/></svg>
<div class="t" style="left:99px;top:242px;letter-spacing:0.038px">Группы с ограниченным доступом</div>
<div style="position:absolute;left:68px;top:264px;width:11px;height:1px;background:repeating-linear-gradient(to right,#808080 0 1px,transparent 1px 2px)"></div>
<div style="position:absolute;left:68px;top:256px;width:1px;height:17px;background:repeating-linear-gradient(to bottom,#808080 0 1px,transparent 1px 2px)"></div>
<div style="position:absolute;left:11px;top:256px;width:1px;height:16px;background:repeating-linear-gradient(to bottom,#808080 0 1px,transparent 1px 2px)"></div>
<div style="position:absolute;left:30px;top:256px;width:1px;height:16px;background:repeating-linear-gradient(to bottom,#808080 0 1px,transparent 1px 2px)"></div>
<svg style="position:absolute;left:64px;top:260px" width="9" height="9" viewBox="0 0 9 9"><use href="#ico-box-plus"/></svg>
<svg style="position:absolute;left:80px;top:256px" width="16" height="16" viewBox="0 0 16 16"><use href="#ico-lockfolder"/></svg>
<div class="t" style="left:99px;top:258px;letter-spacing:-0.107px">Системные службы</div>
<div style="position:absolute;left:68px;top:280px;width:11px;height:1px;background:repeating-linear-gradient(to right,#808080 0 1px,transparent 1px 2px)"></div>
<div style="position:absolute;left:68px;top:272px;width:1px;height:17px;background:repeating-linear-gradient(to bottom,#808080 0 1px,transparent 1px 2px)"></div>
<div style="position:absolute;left:11px;top:272px;width:1px;height:16px;background:repeating-linear-gradient(to bottom,#808080 0 1px,transparent 1px 2px)"></div>
<div style="position:absolute;left:30px;top:272px;width:1px;height:16px;background:repeating-linear-gradient(to bottom,#808080 0 1px,transparent 1px 2px)"></div>
<svg style="position:absolute;left:64px;top:276px" width="9" height="9" viewBox="0 0 9 9"><use href="#ico-box-plus"/></svg>
<svg style="position:absolute;left:80px;top:272px" width="16" height="16" viewBox="0 0 16 16"><use href="#ico-lockfolder"/></svg>
<div class="t" style="left:99px;top:274px;">Реестр</div>
<div style="position:absolute;left:68px;top:296px;width:11px;height:1px;background:repeating-linear-gradient(to right,#808080 0 1px,transparent 1px 2px)"></div>
<div style="position:absolute;left:68px;top:288px;width:1px;height:17px;background:repeating-linear-gradient(to bottom,#808080 0 1px,transparent 1px 2px)"></div>
<div style="position:absolute;left:11px;top:288px;width:1px;height:16px;background:repeating-linear-gradient(to bottom,#808080 0 1px,transparent 1px 2px)"></div>
<div style="position:absolute;left:30px;top:288px;width:1px;height:16px;background:repeating-linear-gradient(to bottom,#808080 0 1px,transparent 1px 2px)"></div>
<svg style="position:absolute;left:64px;top:292px" width="9" height="9" viewBox="0 0 9 9"><use href="#ico-box-plus"/></svg>
<svg style="position:absolute;left:80px;top:288px" width="16" height="16" viewBox="0 0 16 16"><use href="#ico-lockfolder"/></svg>
<div class="t" style="left:99px;top:290px;letter-spacing:-0.167px">Файловая система</div>
<div style="position:absolute;left:68px;top:312px;width:11px;height:1px;background:repeating-linear-gradient(to right,#808080 0 1px,transparent 1px 2px)"></div>
<div style="position:absolute;left:68px;top:304px;width:1px;height:17px;background:repeating-linear-gradient(to bottom,#808080 0 1px,transparent 1px 2px)"></div>
<div style="position:absolute;left:11px;top:304px;width:1px;height:16px;background:repeating-linear-gradient(to bottom,#808080 0 1px,transparent 1px 2px)"></div>
<div style="position:absolute;left:30px;top:304px;width:1px;height:16px;background:repeating-linear-gradient(to bottom,#808080 0 1px,transparent 1px 2px)"></div>
<svg style="position:absolute;left:64px;top:308px" width="9" height="9" viewBox="0 0 9 9"><use href="#ico-box-plus"/></svg>
<svg style="position:absolute;left:80px;top:304px" width="16" height="16" viewBox="0 0 16 16"><use href="#ico-antenna"/></svg>
<div class="t" style="left:99px;top:306px;">Политики беспроводной сети (IEEE 802.11)</div>
<div style="position:absolute;left:68px;top:328px;width:11px;height:1px;background:repeating-linear-gradient(to right,#808080 0 1px,transparent 1px 2px)"></div>
<div style="position:absolute;left:68px;top:320px;width:1px;height:17px;background:repeating-linear-gradient(to bottom,#808080 0 1px,transparent 1px 2px)"></div>
<div style="position:absolute;left:11px;top:320px;width:1px;height:16px;background:repeating-linear-gradient(to bottom,#808080 0 1px,transparent 1px 2px)"></div>
<div style="position:absolute;left:30px;top:320px;width:1px;height:16px;background:repeating-linear-gradient(to bottom,#808080 0 1px,transparent 1px 2px)"></div>
<svg style="position:absolute;left:64px;top:324px" width="9" height="9" viewBox="0 0 9 9"><use href="#ico-box-plus"/></svg>
<svg style="position:absolute;left:80px;top:320px" width="16" height="16" viewBox="0 0 16 16"><use href="#ico-folder"/></svg>
<div class="t" style="left:99px;top:322px;letter-spacing:0.326px">Политики открытого ключа</div>
<div style="position:absolute;left:68px;top:344px;width:11px;height:1px;background:repeating-linear-gradient(to right,#808080 0 1px,transparent 1px 2px)"></div>
<div style="position:absolute;left:68px;top:336px;width:1px;height:17px;background:repeating-linear-gradient(to bottom,#808080 0 1px,transparent 1px 2px)"></div>
<div style="position:absolute;left:11px;top:336px;width:1px;height:16px;background:repeating-linear-gradient(to bottom,#808080 0 1px,transparent 1px 2px)"></div>
<div style="position:absolute;left:30px;top:336px;width:1px;height:16px;background:repeating-linear-gradient(to bottom,#808080 0 1px,transparent 1px 2px)"></div>
<svg style="position:absolute;left:64px;top:340px" width="9" height="9" viewBox="0 0 9 9"><use href="#ico-box-plus"/></svg>
<svg style="position:absolute;left:80px;top:336px" width="16" height="16" viewBox="0 0 16 16"><use href="#ico-folder"/></svg>
<div class="t" style="left:99px;top:338px;">Политики ограниченного использования программ</div>
<div style="position:absolute;left:68px;top:360px;width:11px;height:1px;background:repeating-linear-gradient(to right,#808080 0 1px,transparent 1px 2px)"></div>
<div style="position:absolute;left:68px;top:352px;width:1px;height:9px;background:repeating-linear-gradient(to bottom,#808080 0 1px,transparent 1px 2px)"></div>
<div style="position:absolute;left:11px;top:352px;width:1px;height:16px;background:repeating-linear-gradient(to bottom,#808080 0 1px,transparent 1px 2px)"></div>
<div style="position:absolute;left:30px;top:352px;width:1px;height:16px;background:repeating-linear-gradient(to bottom,#808080 0 1px,transparent 1px 2px)"></div>
<svg style="position:absolute;left:64px;top:356px" width="9" height="9" viewBox="0 0 9 9"><use href="#ico-box-plus"/></svg>
<svg style="position:absolute;left:79px;top:352px" width="16" height="16" viewBox="0 0 16 16"><use href="#ico-ipsec"/></svg>
<div class="t" style="left:99px;top:354px;">Политики безопасности IP на &quot;Служба каталогов Active Directory&quot;</div>
<div style="position:absolute;left:30px;top:376px;width:11px;height:1px;background:repeating-linear-gradient(to right,#808080 0 1px,transparent 1px 2px)"></div>
<div style="position:absolute;left:30px;top:368px;width:1px;height:9px;background:repeating-linear-gradient(to bottom,#808080 0 1px,transparent 1px 2px)"></div>
<div style="position:absolute;left:11px;top:368px;width:1px;height:16px;background:repeating-linear-gradient(to bottom,#808080 0 1px,transparent 1px 2px)"></div>
<svg style="position:absolute;left:26px;top:372px" width="9" height="9" viewBox="0 0 9 9"><use href="#ico-box-plus"/></svg>
<svg style="position:absolute;left:42px;top:368px" width="16" height="16" viewBox="0 0 16 16"><use href="#ico-folder"/></svg>
<div class="t" style="left:61px;top:370px;">Административные шаблоны</div>
<div style="position:absolute;left:11px;top:392px;width:11px;height:1px;background:repeating-linear-gradient(to right,#808080 0 1px,transparent 1px 2px)"></div>
<div style="position:absolute;left:11px;top:384px;width:1px;height:9px;background:repeating-linear-gradient(to bottom,#808080 0 1px,transparent 1px 2px)"></div>
<svg style="position:absolute;left:7px;top:388px" width="9" height="9" viewBox="0 0 9 9"><use href="#ico-box-plus"/></svg>
<svg style="position:absolute;left:22px;top:384px" width="16" height="16" viewBox="0 0 16 16"><use href="#ico-user"/></svg>
<div class="t" style="left:42px;top:386px;letter-spacing:0.104px">Конфигурация пользователя</div>
</div>
<div style="position:absolute;left:7px;top:743px;width:334px;height:16px;background:repeating-conic-gradient(#fff 0 25%, #D0D0C8 0 50%) 0 0/2px 2px"></div>
<div style="position:absolute;left:7px;top:743px;width:16px;height:16px;background:#D0D0C8;box-shadow:inset -1px -1px #404040, inset 1px 1px #D0D0C8, inset -2px -2px #808080, inset 2px 2px #FFFFFF"></div>
<svg style="position:absolute;left:7px;top:743px" width="16" height="16"><path d="M9 4 V11 L5.5 7.5 Z" fill="#000"/></svg>
<div style="position:absolute;left:23px;top:743px;width:206px;height:16px;background:#D0D0C8;box-shadow:inset -1px -1px #404040, inset 1px 1px #D0D0C8, inset -2px -2px #808080, inset 2px 2px #FFFFFF"></div>
<div style="position:absolute;left:325px;top:743px;width:16px;height:16px;background:#D0D0C8;box-shadow:inset -1px -1px #404040, inset 1px 1px #D0D0C8, inset -2px -2px #808080, inset 2px 2px #FFFFFF"></div>
<svg style="position:absolute;left:325px;top:743px" width="16" height="16"><path d="M6 4 V11 L9.5 7.5 Z" fill="#000"/></svg>
</body></html>
